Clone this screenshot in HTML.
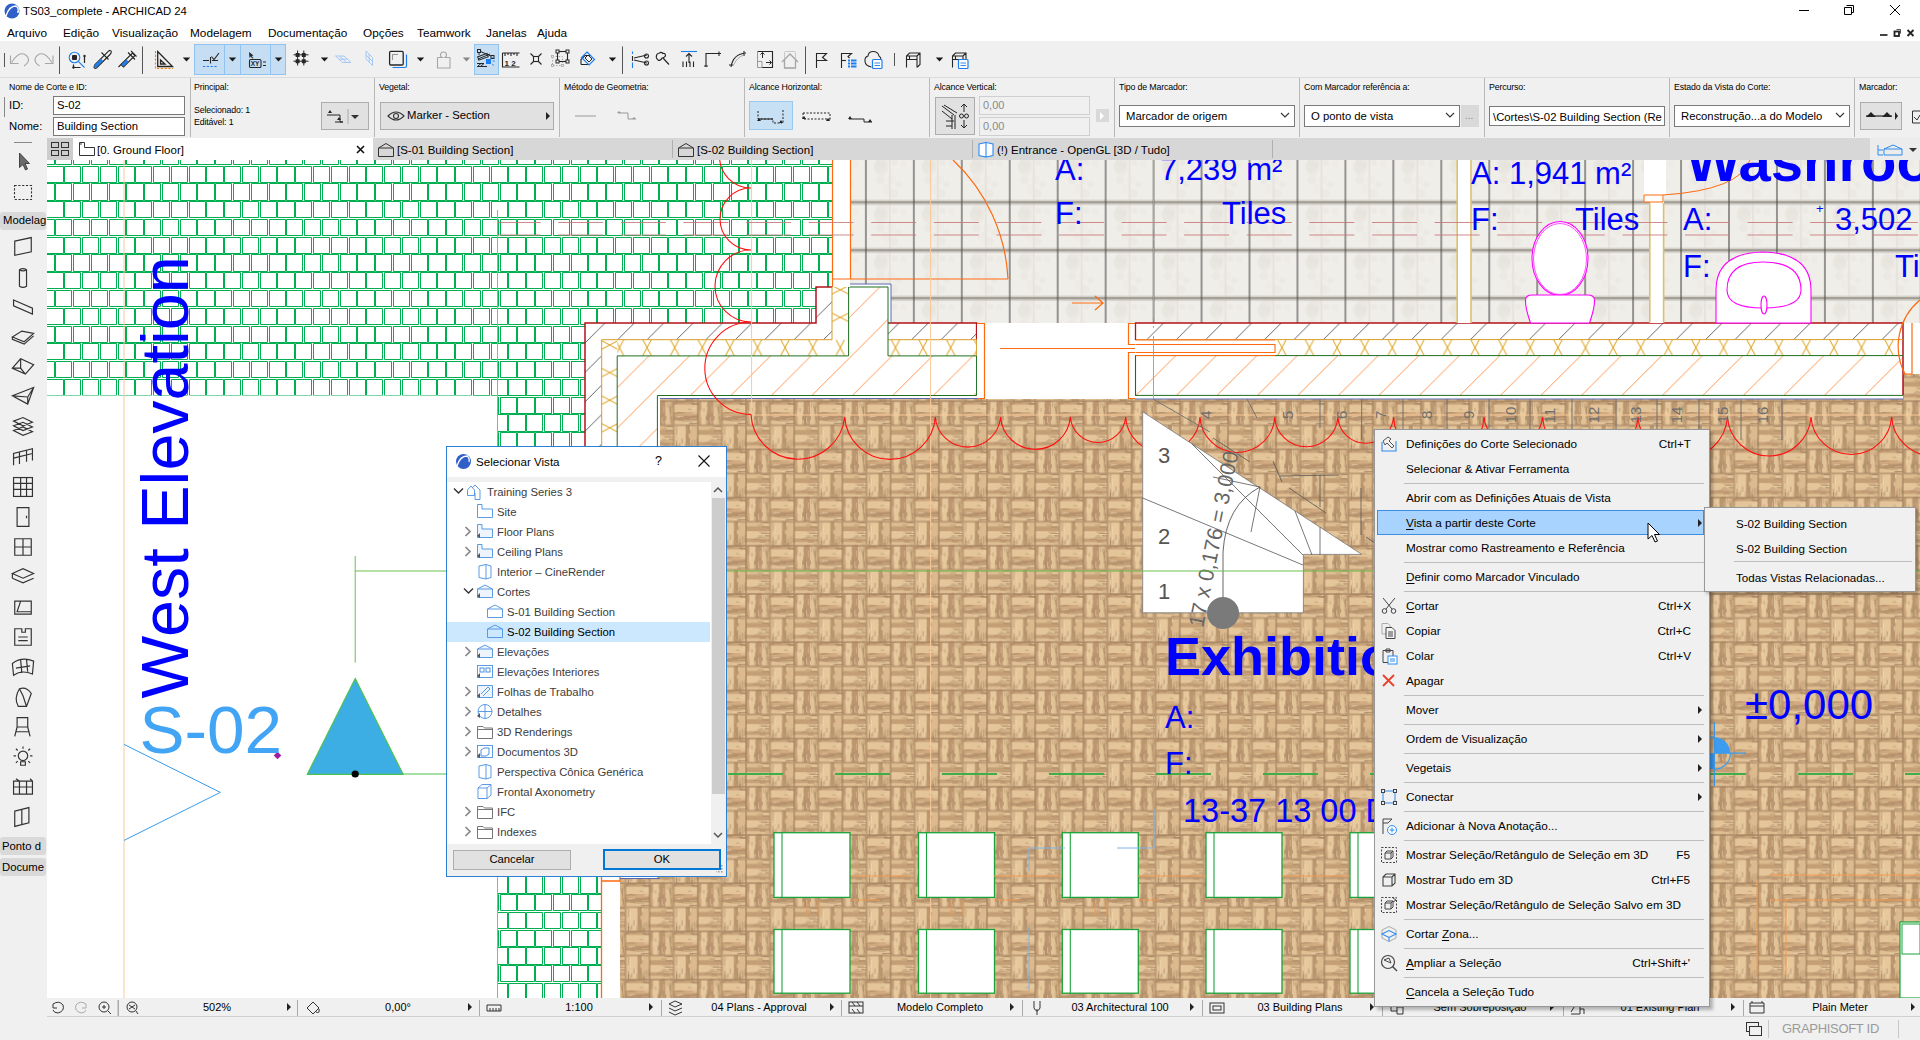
<!DOCTYPE html><html><head><meta charset="utf-8"><style>
*{margin:0;padding:0;box-sizing:border-box}
html,body{width:1920px;height:1040px;overflow:hidden;background:#fff;font-family:"Liberation Sans", sans-serif;color:#000}
.abs{position:absolute}
.t{position:absolute;white-space:nowrap;line-height:1}
</style></head><body>
<svg class="abs" style="left:0;top:0" width="1920" height="1040" viewBox="0 0 1920 1040" font-family="Liberation Sans, sans-serif"><defs><pattern id="brick" patternUnits="userSpaceOnUse" width="17.770" height="35.540" x="62.7" y="165.3"><rect width="17.77" height="35.54" fill="#fff"/><rect x="1.00" y="1.00" width="15.77" height="15.77" fill="none" stroke="#00b050" stroke-width="1.0" shape-rendering="crispEdges"/><rect x="-7.88" y="18.77" width="15.77" height="15.77" fill="none" stroke="#00b050" stroke-width="1.0" shape-rendering="crispEdges"/><rect x="9.88" y="18.77" width="15.77" height="15.77" fill="none" stroke="#00b050" stroke-width="1.0" shape-rendering="crispEdges"/></pattern><pattern id="parq" patternUnits="userSpaceOnUse" width="48.20" height="48.20" x="746" y="594"><rect width="48.2" height="48.2" fill="#d8b487"/><rect x="0.00" y="0" width="3.67" height="24.1" fill="#cca67b"/><rect x="3.62" y="0" width="6.08" height="24.1" fill="#e6c89c"/><rect x="9.64" y="0" width="6.08" height="24.1" fill="#bb9670"/><rect x="15.67" y="0" width="4.87" height="24.1" fill="#e2c397"/><rect x="20.48" y="0" width="3.67" height="24.1" fill="#d3ae82"/><rect x="10.9" y="13.5" width="0.9" height="8.5" fill="#a68462" opacity="0.58"/><rect x="20.6" y="4.6" width="0.9" height="7.8" fill="#a68462" opacity="0.65"/><rect x="19.1" y="2.3" width="0.9" height="4.8" fill="#a08060" opacity="0.62"/><rect x="21.5" y="15.3" width="0.9" height="6.6" fill="#a68462" opacity="0.79"/><rect x="15.8" y="14.8" width="0.9" height="3.9" fill="#a08060" opacity="0.73"/><rect x="1.5" y="0.9" width="0.9" height="8.3" fill="#a08060" opacity="0.71"/><rect x="7.9" y="14.2" width="0.9" height="4.2" fill="#aa8a66" opacity="0.66"/><rect x="12.0" y="16.0" width="0.9" height="5.7" fill="#eed6ae" opacity="0.56"/><rect x="13.3" y="20.6" width="0.9" height="3.5" fill="#eed6ae" opacity="0.53"/><rect x="5.5" y="7.0" width="0.9" height="3.4" fill="#a08060" opacity="0.56"/><rect x="20.4" y="9.3" width="0.9" height="8.7" fill="#a08060" opacity="0.49"/><rect x="22.3" y="1.3" width="0.9" height="5.3" fill="#a68462" opacity="0.57"/><rect x="13.6" y="4.8" width="0.9" height="7.0" fill="#eed6ae" opacity="0.43"/><rect x="8.0" y="16.6" width="0.9" height="7.5" fill="#a08060" opacity="0.45"/><rect x="17.0" y="0.3" width="0.9" height="5.8" fill="#a68462" opacity="0.47"/><rect x="13.5" y="10.8" width="0.9" height="4.1" fill="#aa8a66" opacity="0.57"/><rect x="9.2" y="9.5" width="0.9" height="8.9" fill="#a08060" opacity="0.51"/><rect x="23.4" y="19.3" width="0.9" height="4.8" fill="#a08060" opacity="0.48"/><rect x="9.5" y="17.2" width="0.9" height="6.9" fill="#a08060" opacity="0.42"/><rect x="3.5" y="10.6" width="0.9" height="3.1" fill="#eed6ae" opacity="0.73"/><rect x="9.3" y="1.8" width="0.9" height="4.3" fill="#aa8a66" opacity="0.41"/><rect x="8.9" y="15.0" width="0.9" height="3.8" fill="#a68462" opacity="0.73"/><rect x="3.3" y="9.3" width="0.9" height="6.8" fill="#eed6ae" opacity="0.76"/><rect x="19.7" y="6.0" width="0.9" height="4.1" fill="#aa8a66" opacity="0.67"/><rect x="9.4" y="11.6" width="0.9" height="3.5" fill="#a08060" opacity="0.44"/><rect x="0.9" y="19.7" width="0.9" height="4.4" fill="#a68462" opacity="0.50"/><rect x="0.4" y="0.4" width="23.3" height="23.3" fill="none" stroke="#9e7c5c" stroke-width="0.9" opacity="0.7"/><rect x="24.1" y="0.00" width="24.1" height="3.67" fill="#c9a379"/><rect x="24.1" y="3.62" width="24.1" height="7.28" fill="#e4c599"/><rect x="24.1" y="10.85" width="24.1" height="3.67" fill="#d2ac80"/><rect x="24.1" y="14.46" width="24.1" height="4.87" fill="#b9946e"/><rect x="24.1" y="19.28" width="24.1" height="4.87" fill="#e0c094"/><rect x="43.4" y="14.4" width="4.8" height="0.9" fill="#aa8a66" opacity="0.77"/><rect x="42.3" y="3.0" width="5.9" height="0.9" fill="#a08060" opacity="0.51"/><rect x="45.1" y="4.9" width="3.1" height="0.9" fill="#eed6ae" opacity="0.56"/><rect x="30.1" y="1.1" width="4.7" height="0.9" fill="#aa8a66" opacity="0.44"/><rect x="27.4" y="10.9" width="5.0" height="0.9" fill="#aa8a66" opacity="0.64"/><rect x="43.1" y="11.4" width="5.1" height="0.9" fill="#eed6ae" opacity="0.79"/><rect x="24.6" y="15.3" width="5.9" height="0.9" fill="#eed6ae" opacity="0.53"/><rect x="41.9" y="1.8" width="6.3" height="0.9" fill="#a08060" opacity="0.76"/><rect x="40.4" y="17.0" width="7.8" height="0.9" fill="#eed6ae" opacity="0.54"/><rect x="40.0" y="21.7" width="8.2" height="0.9" fill="#a68462" opacity="0.78"/><rect x="24.8" y="12.0" width="3.1" height="0.9" fill="#a68462" opacity="0.55"/><rect x="24.4" y="1.7" width="3.5" height="0.9" fill="#a08060" opacity="0.80"/><rect x="42.9" y="17.5" width="5.3" height="0.9" fill="#a68462" opacity="0.58"/><rect x="40.7" y="2.0" width="7.5" height="0.9" fill="#a08060" opacity="0.52"/><rect x="26.2" y="0.5" width="8.7" height="0.9" fill="#a08060" opacity="0.60"/><rect x="38.9" y="22.2" width="4.5" height="0.9" fill="#a08060" opacity="0.55"/><rect x="27.6" y="14.7" width="6.1" height="0.9" fill="#eed6ae" opacity="0.66"/><rect x="34.8" y="21.5" width="5.0" height="0.9" fill="#eed6ae" opacity="0.48"/><rect x="34.5" y="19.4" width="8.5" height="0.9" fill="#aa8a66" opacity="0.55"/><rect x="38.2" y="7.6" width="3.8" height="0.9" fill="#a68462" opacity="0.54"/><rect x="44.8" y="1.0" width="3.4" height="0.9" fill="#eed6ae" opacity="0.73"/><rect x="26.8" y="11.4" width="8.6" height="0.9" fill="#a68462" opacity="0.55"/><rect x="36.6" y="16.2" width="7.3" height="0.9" fill="#a68462" opacity="0.53"/><rect x="41.6" y="6.7" width="6.6" height="0.9" fill="#eed6ae" opacity="0.63"/><rect x="31.5" y="19.1" width="3.1" height="0.9" fill="#aa8a66" opacity="0.56"/><rect x="28.7" y="18.5" width="4.6" height="0.9" fill="#aa8a66" opacity="0.72"/><rect x="24.5" y="0.4" width="23.3" height="23.3" fill="none" stroke="#9e7c5c" stroke-width="0.9" opacity="0.7"/><rect x="0" y="24.10" width="24.1" height="4.87" fill="#ddbc90"/><rect x="0" y="28.92" width="24.1" height="4.87" fill="#c49f76"/><rect x="0" y="33.74" width="24.1" height="7.28" fill="#e5c69a"/><rect x="0" y="40.97" width="24.1" height="3.67" fill="#c5a078"/><rect x="0" y="44.59" width="24.1" height="3.67" fill="#dfbe92"/><rect x="20.4" y="26.9" width="3.7" height="0.9" fill="#eed6ae" opacity="0.78"/><rect x="16.5" y="28.9" width="5.9" height="0.9" fill="#aa8a66" opacity="0.69"/><rect x="18.2" y="37.0" width="3.2" height="0.9" fill="#aa8a66" opacity="0.51"/><rect x="8.3" y="40.9" width="6.1" height="0.9" fill="#aa8a66" opacity="0.56"/><rect x="19.1" y="45.9" width="3.5" height="0.9" fill="#a68462" opacity="0.45"/><rect x="10.9" y="39.2" width="8.5" height="0.9" fill="#a68462" opacity="0.62"/><rect x="15.7" y="36.2" width="7.9" height="0.9" fill="#eed6ae" opacity="0.59"/><rect x="15.7" y="29.0" width="7.3" height="0.9" fill="#a08060" opacity="0.49"/><rect x="15.2" y="47.7" width="8.9" height="0.9" fill="#eed6ae" opacity="0.50"/><rect x="17.3" y="24.5" width="6.0" height="0.9" fill="#a08060" opacity="0.58"/><rect x="13.3" y="42.6" width="5.9" height="0.9" fill="#a08060" opacity="0.49"/><rect x="20.9" y="34.4" width="3.2" height="0.9" fill="#eed6ae" opacity="0.67"/><rect x="15.1" y="35.4" width="9.0" height="0.9" fill="#a68462" opacity="0.78"/><rect x="11.9" y="47.0" width="3.5" height="0.9" fill="#aa8a66" opacity="0.58"/><rect x="13.5" y="44.1" width="6.4" height="0.9" fill="#aa8a66" opacity="0.61"/><rect x="19.2" y="37.6" width="4.9" height="0.9" fill="#a68462" opacity="0.78"/><rect x="19.3" y="38.8" width="4.8" height="0.9" fill="#aa8a66" opacity="0.79"/><rect x="12.6" y="37.9" width="4.2" height="0.9" fill="#a08060" opacity="0.60"/><rect x="14.6" y="24.8" width="8.8" height="0.9" fill="#a68462" opacity="0.62"/><rect x="20.5" y="27.0" width="3.6" height="0.9" fill="#aa8a66" opacity="0.43"/><rect x="13.0" y="34.1" width="8.7" height="0.9" fill="#a68462" opacity="0.51"/><rect x="11.4" y="27.2" width="5.6" height="0.9" fill="#a68462" opacity="0.61"/><rect x="2.6" y="34.2" width="3.2" height="0.9" fill="#eed6ae" opacity="0.45"/><rect x="18.8" y="24.6" width="4.2" height="0.9" fill="#aa8a66" opacity="0.40"/><rect x="6.8" y="41.5" width="4.5" height="0.9" fill="#a68462" opacity="0.44"/><rect x="17.6" y="27.1" width="6.1" height="0.9" fill="#eed6ae" opacity="0.69"/><rect x="0.4" y="24.5" width="23.3" height="23.3" fill="none" stroke="#9e7c5c" stroke-width="0.9" opacity="0.7"/><rect x="24.10" y="24.1" width="4.39" height="24.1" fill="#e0c094"/><rect x="28.44" y="24.1" width="7.76" height="24.1" fill="#e7c89c"/><rect x="36.15" y="24.1" width="4.39" height="24.1" fill="#bd9871"/><rect x="40.49" y="24.1" width="7.76" height="24.1" fill="#dcba8e"/><rect x="41.0" y="45.1" width="0.9" height="3.1" fill="#a68462" opacity="0.73"/><rect x="38.9" y="37.1" width="0.9" height="8.2" fill="#aa8a66" opacity="0.61"/><rect x="44.6" y="38.8" width="0.9" height="8.1" fill="#aa8a66" opacity="0.77"/><rect x="39.2" y="32.5" width="0.9" height="4.1" fill="#eed6ae" opacity="0.76"/><rect x="28.8" y="42.9" width="0.9" height="4.2" fill="#a08060" opacity="0.45"/><rect x="29.9" y="41.6" width="0.9" height="4.6" fill="#a08060" opacity="0.57"/><rect x="46.8" y="37.2" width="0.9" height="7.2" fill="#aa8a66" opacity="0.56"/><rect x="40.6" y="24.5" width="0.9" height="4.2" fill="#eed6ae" opacity="0.76"/><rect x="47.4" y="26.9" width="0.9" height="6.0" fill="#eed6ae" opacity="0.60"/><rect x="40.6" y="28.7" width="0.9" height="3.4" fill="#a08060" opacity="0.41"/><rect x="42.5" y="38.9" width="0.9" height="8.4" fill="#a68462" opacity="0.46"/><rect x="28.5" y="29.0" width="0.9" height="8.0" fill="#eed6ae" opacity="0.77"/><rect x="26.4" y="25.6" width="0.9" height="8.7" fill="#a68462" opacity="0.43"/><rect x="26.4" y="33.5" width="0.9" height="5.6" fill="#eed6ae" opacity="0.57"/><rect x="38.6" y="24.4" width="0.9" height="7.2" fill="#aa8a66" opacity="0.47"/><rect x="35.0" y="41.9" width="0.9" height="5.4" fill="#aa8a66" opacity="0.64"/><rect x="26.4" y="43.2" width="0.9" height="4.9" fill="#a08060" opacity="0.72"/><rect x="41.1" y="41.4" width="0.9" height="6.8" fill="#a68462" opacity="0.63"/><rect x="28.7" y="38.2" width="0.9" height="5.0" fill="#eed6ae" opacity="0.51"/><rect x="26.9" y="42.0" width="0.9" height="4.0" fill="#a68462" opacity="0.45"/><rect x="32.1" y="37.1" width="0.9" height="5.2" fill="#a68462" opacity="0.71"/><rect x="33.9" y="41.5" width="0.9" height="3.4" fill="#eed6ae" opacity="0.52"/><rect x="26.5" y="39.3" width="0.9" height="8.9" fill="#a08060" opacity="0.49"/><rect x="46.9" y="40.2" width="0.9" height="5.0" fill="#a68462" opacity="0.63"/><rect x="36.9" y="33.5" width="0.9" height="9.0" fill="#aa8a66" opacity="0.68"/><rect x="42.5" y="45.1" width="0.9" height="3.1" fill="#a08060" opacity="0.70"/><rect x="24.5" y="24.5" width="23.3" height="23.3" fill="none" stroke="#9e7c5c" stroke-width="0.9" opacity="0.7"/></pattern><pattern id="tile" patternUnits="userSpaceOnUse" width="47.95" height="47.95" x="2.8" y="10.4"><rect width="47.95" height="47.95" fill="#f0eee9"/><circle cx="14.6" cy="25.6" r="4.5" fill="#e4ded7" opacity="0.3"/><circle cx="28.5" cy="8.4" r="3.1" fill="#e4ded7" opacity="0.3"/><circle cx="15.3" cy="14.4" r="7.0" fill="#e4ded7" opacity="0.3"/><circle cx="25.5" cy="25.8" r="4.6" fill="#e9e5df" opacity="0.3"/><circle cx="14.3" cy="11.5" r="6.7" fill="#e4ded7" opacity="0.3"/><circle cx="32.7" cy="30.2" r="3.3" fill="#e6e1da" opacity="0.3"/><circle cx="16.8" cy="7.1" r="6.5" fill="#e4ded7" opacity="0.3"/><circle cx="27.4" cy="39.1" r="4.6" fill="#e4ded7" opacity="0.3"/><circle cx="20.2" cy="34.8" r="4.8" fill="#e9e5df" opacity="0.3"/><circle cx="37.6" cy="9.5" r="3.5" fill="#e9e5df" opacity="0.3"/><rect x="23.0" y="0" width="2" height="47.95" fill="#e3dfd8" opacity="0.7"/><rect x="0" y="0" width="47.95" height="1.3" fill="#a29e96"/><rect x="0" y="46.75" width="47.95" height="1.2" fill="#a29e96"/><rect x="0" y="1.3" width="47.95" height="1.2" fill="#c4c0b9"/><rect x="0" y="45.55" width="47.95" height="1.2" fill="#d0ccc5"/><rect x="0" y="0" width="0.55" height="47.95" fill="#4a4946"/><rect x="47.40" y="0" width="0.55" height="47.95" fill="#4a4946"/></pattern><pattern id="hb" patternUnits="userSpaceOnUse" width="29.4" height="29.4" x="16.60" y="0"><path d="M-2 31.4 L31.4 -2 M-31.4 31.4 L2 -2 M27.4 31.4 L60.8 -2" stroke="#555" stroke-width="0.9"/></pattern><pattern id="ho" patternUnits="userSpaceOnUse" width="40.5" height="40.5" x="32.90" y="0"><path d="M-2 42.5 L42.5 -2 M-42.5 42.5 L2 -2 M38.5 42.5 L83.0 -2" stroke="#ff8a3d" stroke-width="0.9"/></pattern><pattern id="hx" patternUnits="userSpaceOnUse" width="27.6" height="16" x="26.10" y="339.6"><path d="M9.50 0 L18.10 16 M18.10 0 L9.50 16" stroke="#e0a21e" stroke-width="1"/></pattern><pattern id="hxv" patternUnits="userSpaceOnUse" width="16" height="27.6" x="601.7" y="0"><path d="M0 9.50 L16 18.10 M0 18.10 L16 9.50" stroke="#e0a21e" stroke-width="1"/></pattern><pattern id="hxv2" patternUnits="userSpaceOnUse" width="16.6" height="27.6" x="832" y="0"><path d="M0 9.50 L16.6 18.10 M0 18.10 L16.6 9.50" stroke="#e0a21e" stroke-width="1"/></pattern><clipPath id="dclip"><rect x="47" y="160" width="1873" height="838"/></clipPath></defs><g clip-path="url(#dclip)"><rect x="47" y="160" width="1873" height="838" fill="#fff"/><clipPath id="bclip"><path d="M47 160 H832 V287 H816 V323 H585 V877 H601 V998 H497 V395.4 H47 Z"/></clipPath><g clip-path="url(#bclip)"><path d="M29.5 130.5H45.5V146.5H29.5ZM46.5 130.5H63.5V146.5H46.5ZM64.5 130.5H80.5V146.5H64.5ZM82.5 130.5H98.5V146.5H82.5ZM100.5 130.5H116.5V146.5H100.5ZM118.5 130.5H134.5V146.5H118.5ZM135.5 130.5H151.5V146.5H135.5ZM153.5 130.5H169.5V146.5H153.5ZM171.5 130.5H187.5V146.5H171.5ZM189.5 130.5H205.5V146.5H189.5ZM206.5 130.5H223.5V146.5H206.5ZM224.5 130.5H240.5V146.5H224.5ZM242.5 130.5H258.5V146.5H242.5ZM260.5 130.5H276.5V146.5H260.5ZM277.5 130.5H294.5V146.5H277.5ZM295.5 130.5H311.5V146.5H295.5ZM313.5 130.5H329.5V146.5H313.5ZM331.5 130.5H347.5V146.5H331.5ZM349.5 130.5H365.5V146.5H349.5ZM366.5 130.5H382.5V146.5H366.5ZM384.5 130.5H400.5V146.5H384.5ZM402.5 130.5H418.5V146.5H402.5ZM420.5 130.5H436.5V146.5H420.5ZM437.5 130.5H454.5V146.5H437.5ZM455.5 130.5H471.5V146.5H455.5ZM473.5 130.5H489.5V146.5H473.5ZM491.5 130.5H507.5V146.5H491.5ZM508.5 130.5H525.5V146.5H508.5ZM526.5 130.5H542.5V146.5H526.5ZM544.5 130.5H560.5V146.5H544.5ZM562.5 130.5H578.5V146.5H562.5ZM580.5 130.5H596.5V146.5H580.5ZM597.5 130.5H613.5V146.5H597.5ZM615.5 130.5H631.5V146.5H615.5ZM633.5 130.5H649.5V146.5H633.5ZM651.5 130.5H667.5V146.5H651.5ZM668.5 130.5H685.5V146.5H668.5ZM686.5 130.5H702.5V146.5H686.5ZM704.5 130.5H720.5V146.5H704.5ZM722.5 130.5H738.5V146.5H722.5ZM739.5 130.5H756.5V146.5H739.5ZM757.5 130.5H773.5V146.5H757.5ZM775.5 130.5H791.5V146.5H775.5ZM793.5 130.5H809.5V146.5H793.5ZM811.5 130.5H827.5V146.5H811.5ZM828.5 130.5H844.5V146.5H828.5ZM846.5 130.5H862.5V146.5H846.5ZM20.5 148.5H36.5V164.5H20.5ZM38.5 148.5H54.5V164.5H38.5ZM55.5 148.5H71.5V164.5H55.5ZM73.5 148.5H89.5V164.5H73.5ZM91.5 148.5H107.5V164.5H91.5ZM109.5 148.5H125.5V164.5H109.5ZM126.5 148.5H143.5V164.5H126.5ZM144.5 148.5H160.5V164.5H144.5ZM162.5 148.5H178.5V164.5H162.5ZM180.5 148.5H196.5V164.5H180.5ZM197.5 148.5H214.5V164.5H197.5ZM215.5 148.5H231.5V164.5H215.5ZM233.5 148.5H249.5V164.5H233.5ZM251.5 148.5H267.5V164.5H251.5ZM269.5 148.5H285.5V164.5H269.5ZM286.5 148.5H302.5V164.5H286.5ZM304.5 148.5H320.5V164.5H304.5ZM322.5 148.5H338.5V164.5H322.5ZM340.5 148.5H356.5V164.5H340.5ZM357.5 148.5H374.5V164.5H357.5ZM375.5 148.5H391.5V164.5H375.5ZM393.5 148.5H409.5V164.5H393.5ZM411.5 148.5H427.5V164.5H411.5ZM428.5 148.5H445.5V164.5H428.5ZM446.5 148.5H462.5V164.5H446.5ZM464.5 148.5H480.5V164.5H464.5ZM482.5 148.5H498.5V164.5H482.5ZM500.5 148.5H516.5V164.5H500.5ZM517.5 148.5H534.5V164.5H517.5ZM535.5 148.5H551.5V164.5H535.5ZM553.5 148.5H569.5V164.5H553.5ZM571.5 148.5H587.5V164.5H571.5ZM588.5 148.5H605.5V164.5H588.5ZM606.5 148.5H622.5V164.5H606.5ZM624.5 148.5H640.5V164.5H624.5ZM642.5 148.5H658.5V164.5H642.5ZM659.5 148.5H676.5V164.5H659.5ZM677.5 148.5H693.5V164.5H677.5ZM695.5 148.5H711.5V164.5H695.5ZM713.5 148.5H729.5V164.5H713.5ZM731.5 148.5H747.5V164.5H731.5ZM748.5 148.5H765.5V164.5H748.5ZM766.5 148.5H782.5V164.5H766.5ZM784.5 148.5H800.5V164.5H784.5ZM802.5 148.5H818.5V164.5H802.5ZM819.5 148.5H836.5V164.5H819.5ZM837.5 148.5H853.5V164.5H837.5ZM29.5 166.5H45.5V182.5H29.5ZM46.5 166.5H63.5V182.5H46.5ZM64.5 166.5H80.5V182.5H64.5ZM82.5 166.5H98.5V182.5H82.5ZM100.5 166.5H116.5V182.5H100.5ZM118.5 166.5H134.5V182.5H118.5ZM135.5 166.5H151.5V182.5H135.5ZM153.5 166.5H169.5V182.5H153.5ZM171.5 166.5H187.5V182.5H171.5ZM189.5 166.5H205.5V182.5H189.5ZM206.5 166.5H223.5V182.5H206.5ZM224.5 166.5H240.5V182.5H224.5ZM242.5 166.5H258.5V182.5H242.5ZM260.5 166.5H276.5V182.5H260.5ZM277.5 166.5H294.5V182.5H277.5ZM295.5 166.5H311.5V182.5H295.5ZM313.5 166.5H329.5V182.5H313.5ZM331.5 166.5H347.5V182.5H331.5ZM349.5 166.5H365.5V182.5H349.5ZM366.5 166.5H382.5V182.5H366.5ZM384.5 166.5H400.5V182.5H384.5ZM402.5 166.5H418.5V182.5H402.5ZM420.5 166.5H436.5V182.5H420.5ZM437.5 166.5H454.5V182.5H437.5ZM455.5 166.5H471.5V182.5H455.5ZM473.5 166.5H489.5V182.5H473.5ZM491.5 166.5H507.5V182.5H491.5ZM508.5 166.5H525.5V182.5H508.5ZM526.5 166.5H542.5V182.5H526.5ZM544.5 166.5H560.5V182.5H544.5ZM562.5 166.5H578.5V182.5H562.5ZM580.5 166.5H596.5V182.5H580.5ZM597.5 166.5H613.5V182.5H597.5ZM615.5 166.5H631.5V182.5H615.5ZM633.5 166.5H649.5V182.5H633.5ZM651.5 166.5H667.5V182.5H651.5ZM668.5 166.5H685.5V182.5H668.5ZM686.5 166.5H702.5V182.5H686.5ZM704.5 166.5H720.5V182.5H704.5ZM722.5 166.5H738.5V182.5H722.5ZM739.5 166.5H756.5V182.5H739.5ZM757.5 166.5H773.5V182.5H757.5ZM775.5 166.5H791.5V182.5H775.5ZM793.5 166.5H809.5V182.5H793.5ZM811.5 166.5H827.5V182.5H811.5ZM828.5 166.5H844.5V182.5H828.5ZM846.5 166.5H862.5V182.5H846.5ZM20.5 183.5H36.5V200.5H20.5ZM38.5 183.5H54.5V200.5H38.5ZM55.5 183.5H71.5V200.5H55.5ZM73.5 183.5H89.5V200.5H73.5ZM91.5 183.5H107.5V200.5H91.5ZM109.5 183.5H125.5V200.5H109.5ZM126.5 183.5H143.5V200.5H126.5ZM144.5 183.5H160.5V200.5H144.5ZM162.5 183.5H178.5V200.5H162.5ZM180.5 183.5H196.5V200.5H180.5ZM197.5 183.5H214.5V200.5H197.5ZM215.5 183.5H231.5V200.5H215.5ZM233.5 183.5H249.5V200.5H233.5ZM251.5 183.5H267.5V200.5H251.5ZM269.5 183.5H285.5V200.5H269.5ZM286.5 183.5H302.5V200.5H286.5ZM304.5 183.5H320.5V200.5H304.5ZM322.5 183.5H338.5V200.5H322.5ZM340.5 183.5H356.5V200.5H340.5ZM357.5 183.5H374.5V200.5H357.5ZM375.5 183.5H391.5V200.5H375.5ZM393.5 183.5H409.5V200.5H393.5ZM411.5 183.5H427.5V200.5H411.5ZM428.5 183.5H445.5V200.5H428.5ZM446.5 183.5H462.5V200.5H446.5ZM464.5 183.5H480.5V200.5H464.5ZM482.5 183.5H498.5V200.5H482.5ZM500.5 183.5H516.5V200.5H500.5ZM517.5 183.5H534.5V200.5H517.5ZM535.5 183.5H551.5V200.5H535.5ZM553.5 183.5H569.5V200.5H553.5ZM571.5 183.5H587.5V200.5H571.5ZM588.5 183.5H605.5V200.5H588.5ZM606.5 183.5H622.5V200.5H606.5ZM624.5 183.5H640.5V200.5H624.5ZM642.5 183.5H658.5V200.5H642.5ZM659.5 183.5H676.5V200.5H659.5ZM677.5 183.5H693.5V200.5H677.5ZM695.5 183.5H711.5V200.5H695.5ZM713.5 183.5H729.5V200.5H713.5ZM731.5 183.5H747.5V200.5H731.5ZM748.5 183.5H765.5V200.5H748.5ZM766.5 183.5H782.5V200.5H766.5ZM784.5 183.5H800.5V200.5H784.5ZM802.5 183.5H818.5V200.5H802.5ZM819.5 183.5H836.5V200.5H819.5ZM837.5 183.5H853.5V200.5H837.5ZM29.5 201.5H45.5V217.5H29.5ZM46.5 201.5H63.5V217.5H46.5ZM64.5 201.5H80.5V217.5H64.5ZM82.5 201.5H98.5V217.5H82.5ZM100.5 201.5H116.5V217.5H100.5ZM118.5 201.5H134.5V217.5H118.5ZM135.5 201.5H151.5V217.5H135.5ZM153.5 201.5H169.5V217.5H153.5ZM171.5 201.5H187.5V217.5H171.5ZM189.5 201.5H205.5V217.5H189.5ZM206.5 201.5H223.5V217.5H206.5ZM224.5 201.5H240.5V217.5H224.5ZM242.5 201.5H258.5V217.5H242.5ZM260.5 201.5H276.5V217.5H260.5ZM277.5 201.5H294.5V217.5H277.5ZM295.5 201.5H311.5V217.5H295.5ZM313.5 201.5H329.5V217.5H313.5ZM331.5 201.5H347.5V217.5H331.5ZM349.5 201.5H365.5V217.5H349.5ZM366.5 201.5H382.5V217.5H366.5ZM384.5 201.5H400.5V217.5H384.5ZM402.5 201.5H418.5V217.5H402.5ZM420.5 201.5H436.5V217.5H420.5ZM437.5 201.5H454.5V217.5H437.5ZM455.5 201.5H471.5V217.5H455.5ZM473.5 201.5H489.5V217.5H473.5ZM491.5 201.5H507.5V217.5H491.5ZM508.5 201.5H525.5V217.5H508.5ZM526.5 201.5H542.5V217.5H526.5ZM544.5 201.5H560.5V217.5H544.5ZM562.5 201.5H578.5V217.5H562.5ZM580.5 201.5H596.5V217.5H580.5ZM597.5 201.5H613.5V217.5H597.5ZM615.5 201.5H631.5V217.5H615.5ZM633.5 201.5H649.5V217.5H633.5ZM651.5 201.5H667.5V217.5H651.5ZM668.5 201.5H685.5V217.5H668.5ZM686.5 201.5H702.5V217.5H686.5ZM704.5 201.5H720.5V217.5H704.5ZM722.5 201.5H738.5V217.5H722.5ZM739.5 201.5H756.5V217.5H739.5ZM757.5 201.5H773.5V217.5H757.5ZM775.5 201.5H791.5V217.5H775.5ZM793.5 201.5H809.5V217.5H793.5ZM811.5 201.5H827.5V217.5H811.5ZM828.5 201.5H844.5V217.5H828.5ZM846.5 201.5H862.5V217.5H846.5ZM20.5 219.5H36.5V235.5H20.5ZM38.5 219.5H54.5V235.5H38.5ZM55.5 219.5H71.5V235.5H55.5ZM73.5 219.5H89.5V235.5H73.5ZM91.5 219.5H107.5V235.5H91.5ZM109.5 219.5H125.5V235.5H109.5ZM126.5 219.5H143.5V235.5H126.5ZM144.5 219.5H160.5V235.5H144.5ZM162.5 219.5H178.5V235.5H162.5ZM180.5 219.5H196.5V235.5H180.5ZM197.5 219.5H214.5V235.5H197.5ZM215.5 219.5H231.5V235.5H215.5ZM233.5 219.5H249.5V235.5H233.5ZM251.5 219.5H267.5V235.5H251.5ZM269.5 219.5H285.5V235.5H269.5ZM286.5 219.5H302.5V235.5H286.5ZM304.5 219.5H320.5V235.5H304.5ZM322.5 219.5H338.5V235.5H322.5ZM340.5 219.5H356.5V235.5H340.5ZM357.5 219.5H374.5V235.5H357.5ZM375.5 219.5H391.5V235.5H375.5ZM393.5 219.5H409.5V235.5H393.5ZM411.5 219.5H427.5V235.5H411.5ZM428.5 219.5H445.5V235.5H428.5ZM446.5 219.5H462.5V235.5H446.5ZM464.5 219.5H480.5V235.5H464.5ZM482.5 219.5H498.5V235.5H482.5ZM500.5 219.5H516.5V235.5H500.5ZM517.5 219.5H534.5V235.5H517.5ZM535.5 219.5H551.5V235.5H535.5ZM553.5 219.5H569.5V235.5H553.5ZM571.5 219.5H587.5V235.5H571.5ZM588.5 219.5H605.5V235.5H588.5ZM606.5 219.5H622.5V235.5H606.5ZM624.5 219.5H640.5V235.5H624.5ZM642.5 219.5H658.5V235.5H642.5ZM659.5 219.5H676.5V235.5H659.5ZM677.5 219.5H693.5V235.5H677.5ZM695.5 219.5H711.5V235.5H695.5ZM713.5 219.5H729.5V235.5H713.5ZM731.5 219.5H747.5V235.5H731.5ZM748.5 219.5H765.5V235.5H748.5ZM766.5 219.5H782.5V235.5H766.5ZM784.5 219.5H800.5V235.5H784.5ZM802.5 219.5H818.5V235.5H802.5ZM819.5 219.5H836.5V235.5H819.5ZM837.5 219.5H853.5V235.5H837.5ZM29.5 237.5H45.5V253.5H29.5ZM46.5 237.5H63.5V253.5H46.5ZM64.5 237.5H80.5V253.5H64.5ZM82.5 237.5H98.5V253.5H82.5ZM100.5 237.5H116.5V253.5H100.5ZM118.5 237.5H134.5V253.5H118.5ZM135.5 237.5H151.5V253.5H135.5ZM153.5 237.5H169.5V253.5H153.5ZM171.5 237.5H187.5V253.5H171.5ZM189.5 237.5H205.5V253.5H189.5ZM206.5 237.5H223.5V253.5H206.5ZM224.5 237.5H240.5V253.5H224.5ZM242.5 237.5H258.5V253.5H242.5ZM260.5 237.5H276.5V253.5H260.5ZM277.5 237.5H294.5V253.5H277.5ZM295.5 237.5H311.5V253.5H295.5ZM313.5 237.5H329.5V253.5H313.5ZM331.5 237.5H347.5V253.5H331.5ZM349.5 237.5H365.5V253.5H349.5ZM366.5 237.5H382.5V253.5H366.5ZM384.5 237.5H400.5V253.5H384.5ZM402.5 237.5H418.5V253.5H402.5ZM420.5 237.5H436.5V253.5H420.5ZM437.5 237.5H454.5V253.5H437.5ZM455.5 237.5H471.5V253.5H455.5ZM473.5 237.5H489.5V253.5H473.5ZM491.5 237.5H507.5V253.5H491.5ZM508.5 237.5H525.5V253.5H508.5ZM526.5 237.5H542.5V253.5H526.5ZM544.5 237.5H560.5V253.5H544.5ZM562.5 237.5H578.5V253.5H562.5ZM580.5 237.5H596.5V253.5H580.5ZM597.5 237.5H613.5V253.5H597.5ZM615.5 237.5H631.5V253.5H615.5ZM633.5 237.5H649.5V253.5H633.5ZM651.5 237.5H667.5V253.5H651.5ZM668.5 237.5H685.5V253.5H668.5ZM686.5 237.5H702.5V253.5H686.5ZM704.5 237.5H720.5V253.5H704.5ZM722.5 237.5H738.5V253.5H722.5ZM739.5 237.5H756.5V253.5H739.5ZM757.5 237.5H773.5V253.5H757.5ZM775.5 237.5H791.5V253.5H775.5ZM793.5 237.5H809.5V253.5H793.5ZM811.5 237.5H827.5V253.5H811.5ZM828.5 237.5H844.5V253.5H828.5ZM846.5 237.5H862.5V253.5H846.5ZM20.5 254.5H36.5V271.5H20.5ZM38.5 254.5H54.5V271.5H38.5ZM55.5 254.5H71.5V271.5H55.5ZM73.5 254.5H89.5V271.5H73.5ZM91.5 254.5H107.5V271.5H91.5ZM109.5 254.5H125.5V271.5H109.5ZM126.5 254.5H143.5V271.5H126.5ZM144.5 254.5H160.5V271.5H144.5ZM162.5 254.5H178.5V271.5H162.5ZM180.5 254.5H196.5V271.5H180.5ZM197.5 254.5H214.5V271.5H197.5ZM215.5 254.5H231.5V271.5H215.5ZM233.5 254.5H249.5V271.5H233.5ZM251.5 254.5H267.5V271.5H251.5ZM269.5 254.5H285.5V271.5H269.5ZM286.5 254.5H302.5V271.5H286.5ZM304.5 254.5H320.5V271.5H304.5ZM322.5 254.5H338.5V271.5H322.5ZM340.5 254.5H356.5V271.5H340.5ZM357.5 254.5H374.5V271.5H357.5ZM375.5 254.5H391.5V271.5H375.5ZM393.5 254.5H409.5V271.5H393.5ZM411.5 254.5H427.5V271.5H411.5ZM428.5 254.5H445.5V271.5H428.5ZM446.5 254.5H462.5V271.5H446.5ZM464.5 254.5H480.5V271.5H464.5ZM482.5 254.5H498.5V271.5H482.5ZM500.5 254.5H516.5V271.5H500.5ZM517.5 254.5H534.5V271.5H517.5ZM535.5 254.5H551.5V271.5H535.5ZM553.5 254.5H569.5V271.5H553.5ZM571.5 254.5H587.5V271.5H571.5ZM588.5 254.5H605.5V271.5H588.5ZM606.5 254.5H622.5V271.5H606.5ZM624.5 254.5H640.5V271.5H624.5ZM642.5 254.5H658.5V271.5H642.5ZM659.5 254.5H676.5V271.5H659.5ZM677.5 254.5H693.5V271.5H677.5ZM695.5 254.5H711.5V271.5H695.5ZM713.5 254.5H729.5V271.5H713.5ZM731.5 254.5H747.5V271.5H731.5ZM748.5 254.5H765.5V271.5H748.5ZM766.5 254.5H782.5V271.5H766.5ZM784.5 254.5H800.5V271.5H784.5ZM802.5 254.5H818.5V271.5H802.5ZM819.5 254.5H836.5V271.5H819.5ZM837.5 254.5H853.5V271.5H837.5ZM29.5 272.5H45.5V288.5H29.5ZM46.5 272.5H63.5V288.5H46.5ZM64.5 272.5H80.5V288.5H64.5ZM82.5 272.5H98.5V288.5H82.5ZM100.5 272.5H116.5V288.5H100.5ZM118.5 272.5H134.5V288.5H118.5ZM135.5 272.5H151.5V288.5H135.5ZM153.5 272.5H169.5V288.5H153.5ZM171.5 272.5H187.5V288.5H171.5ZM189.5 272.5H205.5V288.5H189.5ZM206.5 272.5H223.5V288.5H206.5ZM224.5 272.5H240.5V288.5H224.5ZM242.5 272.5H258.5V288.5H242.5ZM260.5 272.5H276.5V288.5H260.5ZM277.5 272.5H294.5V288.5H277.5ZM295.5 272.5H311.5V288.5H295.5ZM313.5 272.5H329.5V288.5H313.5ZM331.5 272.5H347.5V288.5H331.5ZM349.5 272.5H365.5V288.5H349.5ZM366.5 272.5H382.5V288.5H366.5ZM384.5 272.5H400.5V288.5H384.5ZM402.5 272.5H418.5V288.5H402.5ZM420.5 272.5H436.5V288.5H420.5ZM437.5 272.5H454.5V288.5H437.5ZM455.5 272.5H471.5V288.5H455.5ZM473.5 272.5H489.5V288.5H473.5ZM491.5 272.5H507.5V288.5H491.5ZM508.5 272.5H525.5V288.5H508.5ZM526.5 272.5H542.5V288.5H526.5ZM544.5 272.5H560.5V288.5H544.5ZM562.5 272.5H578.5V288.5H562.5ZM580.5 272.5H596.5V288.5H580.5ZM597.5 272.5H613.5V288.5H597.5ZM615.5 272.5H631.5V288.5H615.5ZM633.5 272.5H649.5V288.5H633.5ZM651.5 272.5H667.5V288.5H651.5ZM668.5 272.5H685.5V288.5H668.5ZM686.5 272.5H702.5V288.5H686.5ZM704.5 272.5H720.5V288.5H704.5ZM722.5 272.5H738.5V288.5H722.5ZM739.5 272.5H756.5V288.5H739.5ZM757.5 272.5H773.5V288.5H757.5ZM775.5 272.5H791.5V288.5H775.5ZM793.5 272.5H809.5V288.5H793.5ZM811.5 272.5H827.5V288.5H811.5ZM828.5 272.5H844.5V288.5H828.5ZM846.5 272.5H862.5V288.5H846.5ZM20.5 290.5H36.5V306.5H20.5ZM38.5 290.5H54.5V306.5H38.5ZM55.5 290.5H71.5V306.5H55.5ZM73.5 290.5H89.5V306.5H73.5ZM91.5 290.5H107.5V306.5H91.5ZM109.5 290.5H125.5V306.5H109.5ZM126.5 290.5H143.5V306.5H126.5ZM144.5 290.5H160.5V306.5H144.5ZM162.5 290.5H178.5V306.5H162.5ZM180.5 290.5H196.5V306.5H180.5ZM197.5 290.5H214.5V306.5H197.5ZM215.5 290.5H231.5V306.5H215.5ZM233.5 290.5H249.5V306.5H233.5ZM251.5 290.5H267.5V306.5H251.5ZM269.5 290.5H285.5V306.5H269.5ZM286.5 290.5H302.5V306.5H286.5ZM304.5 290.5H320.5V306.5H304.5ZM322.5 290.5H338.5V306.5H322.5ZM340.5 290.5H356.5V306.5H340.5ZM357.5 290.5H374.5V306.5H357.5ZM375.5 290.5H391.5V306.5H375.5ZM393.5 290.5H409.5V306.5H393.5ZM411.5 290.5H427.5V306.5H411.5ZM428.5 290.5H445.5V306.5H428.5ZM446.5 290.5H462.5V306.5H446.5ZM464.5 290.5H480.5V306.5H464.5ZM482.5 290.5H498.5V306.5H482.5ZM500.5 290.5H516.5V306.5H500.5ZM517.5 290.5H534.5V306.5H517.5ZM535.5 290.5H551.5V306.5H535.5ZM553.5 290.5H569.5V306.5H553.5ZM571.5 290.5H587.5V306.5H571.5ZM588.5 290.5H605.5V306.5H588.5ZM606.5 290.5H622.5V306.5H606.5ZM624.5 290.5H640.5V306.5H624.5ZM642.5 290.5H658.5V306.5H642.5ZM659.5 290.5H676.5V306.5H659.5ZM677.5 290.5H693.5V306.5H677.5ZM695.5 290.5H711.5V306.5H695.5ZM713.5 290.5H729.5V306.5H713.5ZM731.5 290.5H747.5V306.5H731.5ZM748.5 290.5H765.5V306.5H748.5ZM766.5 290.5H782.5V306.5H766.5ZM784.5 290.5H800.5V306.5H784.5ZM802.5 290.5H818.5V306.5H802.5ZM819.5 290.5H836.5V306.5H819.5ZM837.5 290.5H853.5V306.5H837.5ZM29.5 308.5H45.5V324.5H29.5ZM46.5 308.5H63.5V324.5H46.5ZM64.5 308.5H80.5V324.5H64.5ZM82.5 308.5H98.5V324.5H82.5ZM100.5 308.5H116.5V324.5H100.5ZM118.5 308.5H134.5V324.5H118.5ZM135.5 308.5H151.5V324.5H135.5ZM153.5 308.5H169.5V324.5H153.5ZM171.5 308.5H187.5V324.5H171.5ZM189.5 308.5H205.5V324.5H189.5ZM206.5 308.5H223.5V324.5H206.5ZM224.5 308.5H240.5V324.5H224.5ZM242.5 308.5H258.5V324.5H242.5ZM260.5 308.5H276.5V324.5H260.5ZM277.5 308.5H294.5V324.5H277.5ZM295.5 308.5H311.5V324.5H295.5ZM313.5 308.5H329.5V324.5H313.5ZM331.5 308.5H347.5V324.5H331.5ZM349.5 308.5H365.5V324.5H349.5ZM366.5 308.5H382.5V324.5H366.5ZM384.5 308.5H400.5V324.5H384.5ZM402.5 308.5H418.5V324.5H402.5ZM420.5 308.5H436.5V324.5H420.5ZM437.5 308.5H454.5V324.5H437.5ZM455.5 308.5H471.5V324.5H455.5ZM473.5 308.5H489.5V324.5H473.5ZM491.5 308.5H507.5V324.5H491.5ZM508.5 308.5H525.5V324.5H508.5ZM526.5 308.5H542.5V324.5H526.5ZM544.5 308.5H560.5V324.5H544.5ZM562.5 308.5H578.5V324.5H562.5ZM580.5 308.5H596.5V324.5H580.5ZM597.5 308.5H613.5V324.5H597.5ZM615.5 308.5H631.5V324.5H615.5ZM633.5 308.5H649.5V324.5H633.5ZM651.5 308.5H667.5V324.5H651.5ZM668.5 308.5H685.5V324.5H668.5ZM686.5 308.5H702.5V324.5H686.5ZM704.5 308.5H720.5V324.5H704.5ZM722.5 308.5H738.5V324.5H722.5ZM739.5 308.5H756.5V324.5H739.5ZM757.5 308.5H773.5V324.5H757.5ZM775.5 308.5H791.5V324.5H775.5ZM793.5 308.5H809.5V324.5H793.5ZM811.5 308.5H827.5V324.5H811.5ZM828.5 308.5H844.5V324.5H828.5ZM846.5 308.5H862.5V324.5H846.5ZM20.5 326.5H36.5V342.5H20.5ZM38.5 326.5H54.5V342.5H38.5ZM55.5 326.5H71.5V342.5H55.5ZM73.5 326.5H89.5V342.5H73.5ZM91.5 326.5H107.5V342.5H91.5ZM109.5 326.5H125.5V342.5H109.5ZM126.5 326.5H143.5V342.5H126.5ZM144.5 326.5H160.5V342.5H144.5ZM162.5 326.5H178.5V342.5H162.5ZM180.5 326.5H196.5V342.5H180.5ZM197.5 326.5H214.5V342.5H197.5ZM215.5 326.5H231.5V342.5H215.5ZM233.5 326.5H249.5V342.5H233.5ZM251.5 326.5H267.5V342.5H251.5ZM269.5 326.5H285.5V342.5H269.5ZM286.5 326.5H302.5V342.5H286.5ZM304.5 326.5H320.5V342.5H304.5ZM322.5 326.5H338.5V342.5H322.5ZM340.5 326.5H356.5V342.5H340.5ZM357.5 326.5H374.5V342.5H357.5ZM375.5 326.5H391.5V342.5H375.5ZM393.5 326.5H409.5V342.5H393.5ZM411.5 326.5H427.5V342.5H411.5ZM428.5 326.5H445.5V342.5H428.5ZM446.5 326.5H462.5V342.5H446.5ZM464.5 326.5H480.5V342.5H464.5ZM482.5 326.5H498.5V342.5H482.5ZM500.5 326.5H516.5V342.5H500.5ZM517.5 326.5H534.5V342.5H517.5ZM535.5 326.5H551.5V342.5H535.5ZM553.5 326.5H569.5V342.5H553.5ZM571.5 326.5H587.5V342.5H571.5ZM588.5 326.5H605.5V342.5H588.5ZM606.5 326.5H622.5V342.5H606.5ZM624.5 326.5H640.5V342.5H624.5ZM642.5 326.5H658.5V342.5H642.5ZM659.5 326.5H676.5V342.5H659.5ZM677.5 326.5H693.5V342.5H677.5ZM695.5 326.5H711.5V342.5H695.5ZM713.5 326.5H729.5V342.5H713.5ZM731.5 326.5H747.5V342.5H731.5ZM748.5 326.5H765.5V342.5H748.5ZM766.5 326.5H782.5V342.5H766.5ZM784.5 326.5H800.5V342.5H784.5ZM802.5 326.5H818.5V342.5H802.5ZM819.5 326.5H836.5V342.5H819.5ZM837.5 326.5H853.5V342.5H837.5ZM29.5 343.5H45.5V359.5H29.5ZM46.5 343.5H63.5V359.5H46.5ZM64.5 343.5H80.5V359.5H64.5ZM82.5 343.5H98.5V359.5H82.5ZM100.5 343.5H116.5V359.5H100.5ZM118.5 343.5H134.5V359.5H118.5ZM135.5 343.5H151.5V359.5H135.5ZM153.5 343.5H169.5V359.5H153.5ZM171.5 343.5H187.5V359.5H171.5ZM189.5 343.5H205.5V359.5H189.5ZM206.5 343.5H223.5V359.5H206.5ZM224.5 343.5H240.5V359.5H224.5ZM242.5 343.5H258.5V359.5H242.5ZM260.5 343.5H276.5V359.5H260.5ZM277.5 343.5H294.5V359.5H277.5ZM295.5 343.5H311.5V359.5H295.5ZM313.5 343.5H329.5V359.5H313.5ZM331.5 343.5H347.5V359.5H331.5ZM349.5 343.5H365.5V359.5H349.5ZM366.5 343.5H382.5V359.5H366.5ZM384.5 343.5H400.5V359.5H384.5ZM402.5 343.5H418.5V359.5H402.5ZM420.5 343.5H436.5V359.5H420.5ZM437.5 343.5H454.5V359.5H437.5ZM455.5 343.5H471.5V359.5H455.5ZM473.5 343.5H489.5V359.5H473.5ZM491.5 343.5H507.5V359.5H491.5ZM508.5 343.5H525.5V359.5H508.5ZM526.5 343.5H542.5V359.5H526.5ZM544.5 343.5H560.5V359.5H544.5ZM562.5 343.5H578.5V359.5H562.5ZM580.5 343.5H596.5V359.5H580.5ZM597.5 343.5H613.5V359.5H597.5ZM615.5 343.5H631.5V359.5H615.5ZM633.5 343.5H649.5V359.5H633.5ZM651.5 343.5H667.5V359.5H651.5ZM668.5 343.5H685.5V359.5H668.5ZM686.5 343.5H702.5V359.5H686.5ZM704.5 343.5H720.5V359.5H704.5ZM722.5 343.5H738.5V359.5H722.5ZM739.5 343.5H756.5V359.5H739.5ZM757.5 343.5H773.5V359.5H757.5ZM775.5 343.5H791.5V359.5H775.5ZM793.5 343.5H809.5V359.5H793.5ZM811.5 343.5H827.5V359.5H811.5ZM828.5 343.5H844.5V359.5H828.5ZM846.5 343.5H862.5V359.5H846.5ZM20.5 361.5H36.5V377.5H20.5ZM38.5 361.5H54.5V377.5H38.5ZM55.5 361.5H71.5V377.5H55.5ZM73.5 361.5H89.5V377.5H73.5ZM91.5 361.5H107.5V377.5H91.5ZM109.5 361.5H125.5V377.5H109.5ZM126.5 361.5H143.5V377.5H126.5ZM144.5 361.5H160.5V377.5H144.5ZM162.5 361.5H178.5V377.5H162.5ZM180.5 361.5H196.5V377.5H180.5ZM197.5 361.5H214.5V377.5H197.5ZM215.5 361.5H231.5V377.5H215.5ZM233.5 361.5H249.5V377.5H233.5ZM251.5 361.5H267.5V377.5H251.5ZM269.5 361.5H285.5V377.5H269.5ZM286.5 361.5H302.5V377.5H286.5ZM304.5 361.5H320.5V377.5H304.5ZM322.5 361.5H338.5V377.5H322.5ZM340.5 361.5H356.5V377.5H340.5ZM357.5 361.5H374.5V377.5H357.5ZM375.5 361.5H391.5V377.5H375.5ZM393.5 361.5H409.5V377.5H393.5ZM411.5 361.5H427.5V377.5H411.5ZM428.5 361.5H445.5V377.5H428.5ZM446.5 361.5H462.5V377.5H446.5ZM464.5 361.5H480.5V377.5H464.5ZM482.5 361.5H498.5V377.5H482.5ZM500.5 361.5H516.5V377.5H500.5ZM517.5 361.5H534.5V377.5H517.5ZM535.5 361.5H551.5V377.5H535.5ZM553.5 361.5H569.5V377.5H553.5ZM571.5 361.5H587.5V377.5H571.5ZM588.5 361.5H605.5V377.5H588.5ZM606.5 361.5H622.5V377.5H606.5ZM624.5 361.5H640.5V377.5H624.5ZM642.5 361.5H658.5V377.5H642.5ZM659.5 361.5H676.5V377.5H659.5ZM677.5 361.5H693.5V377.5H677.5ZM695.5 361.5H711.5V377.5H695.5ZM713.5 361.5H729.5V377.5H713.5ZM731.5 361.5H747.5V377.5H731.5ZM748.5 361.5H765.5V377.5H748.5ZM766.5 361.5H782.5V377.5H766.5ZM784.5 361.5H800.5V377.5H784.5ZM802.5 361.5H818.5V377.5H802.5ZM819.5 361.5H836.5V377.5H819.5ZM837.5 361.5H853.5V377.5H837.5ZM29.5 379.5H45.5V395.5H29.5ZM46.5 379.5H63.5V395.5H46.5ZM64.5 379.5H80.5V395.5H64.5ZM82.5 379.5H98.5V395.5H82.5ZM100.5 379.5H116.5V395.5H100.5ZM118.5 379.5H134.5V395.5H118.5ZM135.5 379.5H151.5V395.5H135.5ZM153.5 379.5H169.5V395.5H153.5ZM171.5 379.5H187.5V395.5H171.5ZM189.5 379.5H205.5V395.5H189.5ZM206.5 379.5H223.5V395.5H206.5ZM224.5 379.5H240.5V395.5H224.5ZM242.5 379.5H258.5V395.5H242.5ZM260.5 379.5H276.5V395.5H260.5ZM277.5 379.5H294.5V395.5H277.5ZM295.5 379.5H311.5V395.5H295.5ZM313.5 379.5H329.5V395.5H313.5ZM331.5 379.5H347.5V395.5H331.5ZM349.5 379.5H365.5V395.5H349.5ZM366.5 379.5H382.5V395.5H366.5ZM384.5 379.5H400.5V395.5H384.5ZM402.5 379.5H418.5V395.5H402.5ZM420.5 379.5H436.5V395.5H420.5ZM437.5 379.5H454.5V395.5H437.5ZM455.5 379.5H471.5V395.5H455.5ZM473.5 379.5H489.5V395.5H473.5ZM491.5 379.5H507.5V395.5H491.5ZM508.5 379.5H525.5V395.5H508.5ZM526.5 379.5H542.5V395.5H526.5ZM544.5 379.5H560.5V395.5H544.5ZM562.5 379.5H578.5V395.5H562.5ZM580.5 379.5H596.5V395.5H580.5ZM597.5 379.5H613.5V395.5H597.5ZM615.5 379.5H631.5V395.5H615.5ZM633.5 379.5H649.5V395.5H633.5ZM651.5 379.5H667.5V395.5H651.5ZM668.5 379.5H685.5V395.5H668.5ZM686.5 379.5H702.5V395.5H686.5ZM704.5 379.5H720.5V395.5H704.5ZM722.5 379.5H738.5V395.5H722.5ZM739.5 379.5H756.5V395.5H739.5ZM757.5 379.5H773.5V395.5H757.5ZM775.5 379.5H791.5V395.5H775.5ZM793.5 379.5H809.5V395.5H793.5ZM811.5 379.5H827.5V395.5H811.5ZM828.5 379.5H844.5V395.5H828.5ZM846.5 379.5H862.5V395.5H846.5ZM20.5 397.5H36.5V413.5H20.5ZM38.5 397.5H54.5V413.5H38.5ZM55.5 397.5H71.5V413.5H55.5ZM73.5 397.5H89.5V413.5H73.5ZM91.5 397.5H107.5V413.5H91.5ZM109.5 397.5H125.5V413.5H109.5ZM126.5 397.5H143.5V413.5H126.5ZM144.5 397.5H160.5V413.5H144.5ZM162.5 397.5H178.5V413.5H162.5ZM180.5 397.5H196.5V413.5H180.5ZM197.5 397.5H214.5V413.5H197.5ZM215.5 397.5H231.5V413.5H215.5ZM233.5 397.5H249.5V413.5H233.5ZM251.5 397.5H267.5V413.5H251.5ZM269.5 397.5H285.5V413.5H269.5ZM286.5 397.5H302.5V413.5H286.5ZM304.5 397.5H320.5V413.5H304.5ZM322.5 397.5H338.5V413.5H322.5ZM340.5 397.5H356.5V413.5H340.5ZM357.5 397.5H374.5V413.5H357.5ZM375.5 397.5H391.5V413.5H375.5ZM393.5 397.5H409.5V413.5H393.5ZM411.5 397.5H427.5V413.5H411.5ZM428.5 397.5H445.5V413.5H428.5ZM446.5 397.5H462.5V413.5H446.5ZM464.5 397.5H480.5V413.5H464.5ZM482.5 397.5H498.5V413.5H482.5ZM500.5 397.5H516.5V413.5H500.5ZM517.5 397.5H534.5V413.5H517.5ZM535.5 397.5H551.5V413.5H535.5ZM553.5 397.5H569.5V413.5H553.5ZM571.5 397.5H587.5V413.5H571.5ZM588.5 397.5H605.5V413.5H588.5ZM606.5 397.5H622.5V413.5H606.5ZM624.5 397.5H640.5V413.5H624.5ZM642.5 397.5H658.5V413.5H642.5ZM659.5 397.5H676.5V413.5H659.5ZM677.5 397.5H693.5V413.5H677.5ZM695.5 397.5H711.5V413.5H695.5ZM713.5 397.5H729.5V413.5H713.5ZM731.5 397.5H747.5V413.5H731.5ZM748.5 397.5H765.5V413.5H748.5ZM766.5 397.5H782.5V413.5H766.5ZM784.5 397.5H800.5V413.5H784.5ZM802.5 397.5H818.5V413.5H802.5ZM819.5 397.5H836.5V413.5H819.5ZM837.5 397.5H853.5V413.5H837.5ZM464.5 361.5H480.5V377.5H464.5ZM482.5 361.5H498.5V377.5H482.5ZM500.5 361.5H516.5V377.5H500.5ZM517.5 361.5H534.5V377.5H517.5ZM535.5 361.5H551.5V377.5H535.5ZM553.5 361.5H569.5V377.5H553.5ZM571.5 361.5H587.5V377.5H571.5ZM588.5 361.5H605.5V377.5H588.5ZM606.5 361.5H622.5V377.5H606.5ZM473.5 379.5H489.5V395.5H473.5ZM491.5 379.5H507.5V395.5H491.5ZM508.5 379.5H525.5V395.5H508.5ZM526.5 379.5H542.5V395.5H526.5ZM544.5 379.5H560.5V395.5H544.5ZM562.5 379.5H578.5V395.5H562.5ZM580.5 379.5H596.5V395.5H580.5ZM597.5 379.5H613.5V395.5H597.5ZM615.5 379.5H631.5V395.5H615.5ZM464.5 397.5H480.5V413.5H464.5ZM482.5 397.5H498.5V413.5H482.5ZM500.5 397.5H516.5V413.5H500.5ZM517.5 397.5H534.5V413.5H517.5ZM535.5 397.5H551.5V413.5H535.5ZM553.5 397.5H569.5V413.5H553.5ZM571.5 397.5H587.5V413.5H571.5ZM588.5 397.5H605.5V413.5H588.5ZM606.5 397.5H622.5V413.5H606.5ZM473.5 414.5H489.5V431.5H473.5ZM491.5 414.5H507.5V431.5H491.5ZM508.5 414.5H525.5V431.5H508.5ZM526.5 414.5H542.5V431.5H526.5ZM544.5 414.5H560.5V431.5H544.5ZM562.5 414.5H578.5V431.5H562.5ZM580.5 414.5H596.5V431.5H580.5ZM597.5 414.5H613.5V431.5H597.5ZM615.5 414.5H631.5V431.5H615.5ZM464.5 432.5H480.5V448.5H464.5ZM482.5 432.5H498.5V448.5H482.5ZM500.5 432.5H516.5V448.5H500.5ZM517.5 432.5H534.5V448.5H517.5ZM535.5 432.5H551.5V448.5H535.5ZM553.5 432.5H569.5V448.5H553.5ZM571.5 432.5H587.5V448.5H571.5ZM588.5 432.5H605.5V448.5H588.5ZM606.5 432.5H622.5V448.5H606.5ZM473.5 450.5H489.5V466.5H473.5ZM491.5 450.5H507.5V466.5H491.5ZM508.5 450.5H525.5V466.5H508.5ZM526.5 450.5H542.5V466.5H526.5ZM544.5 450.5H560.5V466.5H544.5ZM562.5 450.5H578.5V466.5H562.5ZM580.5 450.5H596.5V466.5H580.5ZM597.5 450.5H613.5V466.5H597.5ZM615.5 450.5H631.5V466.5H615.5ZM464.5 468.5H480.5V484.5H464.5ZM482.5 468.5H498.5V484.5H482.5ZM500.5 468.5H516.5V484.5H500.5ZM517.5 468.5H534.5V484.5H517.5ZM535.5 468.5H551.5V484.5H535.5ZM553.5 468.5H569.5V484.5H553.5ZM571.5 468.5H587.5V484.5H571.5ZM588.5 468.5H605.5V484.5H588.5ZM606.5 468.5H622.5V484.5H606.5ZM473.5 485.5H489.5V502.5H473.5ZM491.5 485.5H507.5V502.5H491.5ZM508.5 485.5H525.5V502.5H508.5ZM526.5 485.5H542.5V502.5H526.5ZM544.5 485.5H560.5V502.5H544.5ZM562.5 485.5H578.5V502.5H562.5ZM580.5 485.5H596.5V502.5H580.5ZM597.5 485.5H613.5V502.5H597.5ZM615.5 485.5H631.5V502.5H615.5ZM464.5 503.5H480.5V519.5H464.5ZM482.5 503.5H498.5V519.5H482.5ZM500.5 503.5H516.5V519.5H500.5ZM517.5 503.5H534.5V519.5H517.5ZM535.5 503.5H551.5V519.5H535.5ZM553.5 503.5H569.5V519.5H553.5ZM571.5 503.5H587.5V519.5H571.5ZM588.5 503.5H605.5V519.5H588.5ZM606.5 503.5H622.5V519.5H606.5ZM473.5 521.5H489.5V537.5H473.5ZM491.5 521.5H507.5V537.5H491.5ZM508.5 521.5H525.5V537.5H508.5ZM526.5 521.5H542.5V537.5H526.5ZM544.5 521.5H560.5V537.5H544.5ZM562.5 521.5H578.5V537.5H562.5ZM580.5 521.5H596.5V537.5H580.5ZM597.5 521.5H613.5V537.5H597.5ZM615.5 521.5H631.5V537.5H615.5ZM464.5 539.5H480.5V555.5H464.5ZM482.5 539.5H498.5V555.5H482.5ZM500.5 539.5H516.5V555.5H500.5ZM517.5 539.5H534.5V555.5H517.5ZM535.5 539.5H551.5V555.5H535.5ZM553.5 539.5H569.5V555.5H553.5ZM571.5 539.5H587.5V555.5H571.5ZM588.5 539.5H605.5V555.5H588.5ZM606.5 539.5H622.5V555.5H606.5ZM473.5 557.5H489.5V573.5H473.5ZM491.5 557.5H507.5V573.5H491.5ZM508.5 557.5H525.5V573.5H508.5ZM526.5 557.5H542.5V573.5H526.5ZM544.5 557.5H560.5V573.5H544.5ZM562.5 557.5H578.5V573.5H562.5ZM580.5 557.5H596.5V573.5H580.5ZM597.5 557.5H613.5V573.5H597.5ZM615.5 557.5H631.5V573.5H615.5ZM464.5 574.5H480.5V590.5H464.5ZM482.5 574.5H498.5V590.5H482.5ZM500.5 574.5H516.5V590.5H500.5ZM517.5 574.5H534.5V590.5H517.5ZM535.5 574.5H551.5V590.5H535.5ZM553.5 574.5H569.5V590.5H553.5ZM571.5 574.5H587.5V590.5H571.5ZM588.5 574.5H605.5V590.5H588.5ZM606.5 574.5H622.5V590.5H606.5ZM473.5 592.5H489.5V608.5H473.5ZM491.5 592.5H507.5V608.5H491.5ZM508.5 592.5H525.5V608.5H508.5ZM526.5 592.5H542.5V608.5H526.5ZM544.5 592.5H560.5V608.5H544.5ZM562.5 592.5H578.5V608.5H562.5ZM580.5 592.5H596.5V608.5H580.5ZM597.5 592.5H613.5V608.5H597.5ZM615.5 592.5H631.5V608.5H615.5ZM464.5 610.5H480.5V626.5H464.5ZM482.5 610.5H498.5V626.5H482.5ZM500.5 610.5H516.5V626.5H500.5ZM517.5 610.5H534.5V626.5H517.5ZM535.5 610.5H551.5V626.5H535.5ZM553.5 610.5H569.5V626.5H553.5ZM571.5 610.5H587.5V626.5H571.5ZM588.5 610.5H605.5V626.5H588.5ZM606.5 610.5H622.5V626.5H606.5ZM473.5 628.5H489.5V644.5H473.5ZM491.5 628.5H507.5V644.5H491.5ZM508.5 628.5H525.5V644.5H508.5ZM526.5 628.5H542.5V644.5H526.5ZM544.5 628.5H560.5V644.5H544.5ZM562.5 628.5H578.5V644.5H562.5ZM580.5 628.5H596.5V644.5H580.5ZM597.5 628.5H613.5V644.5H597.5ZM615.5 628.5H631.5V644.5H615.5ZM464.5 645.5H480.5V662.5H464.5ZM482.5 645.5H498.5V662.5H482.5ZM500.5 645.5H516.5V662.5H500.5ZM517.5 645.5H534.5V662.5H517.5ZM535.5 645.5H551.5V662.5H535.5ZM553.5 645.5H569.5V662.5H553.5ZM571.5 645.5H587.5V662.5H571.5ZM588.5 645.5H605.5V662.5H588.5ZM606.5 645.5H622.5V662.5H606.5ZM473.5 663.5H489.5V679.5H473.5ZM491.5 663.5H507.5V679.5H491.5ZM508.5 663.5H525.5V679.5H508.5ZM526.5 663.5H542.5V679.5H526.5ZM544.5 663.5H560.5V679.5H544.5ZM562.5 663.5H578.5V679.5H562.5ZM580.5 663.5H596.5V679.5H580.5ZM597.5 663.5H613.5V679.5H597.5ZM615.5 663.5H631.5V679.5H615.5ZM464.5 681.5H480.5V697.5H464.5ZM482.5 681.5H498.5V697.5H482.5ZM500.5 681.5H516.5V697.5H500.5ZM517.5 681.5H534.5V697.5H517.5ZM535.5 681.5H551.5V697.5H535.5ZM553.5 681.5H569.5V697.5H553.5ZM571.5 681.5H587.5V697.5H571.5ZM588.5 681.5H605.5V697.5H588.5ZM606.5 681.5H622.5V697.5H606.5ZM473.5 699.5H489.5V715.5H473.5ZM491.5 699.5H507.5V715.5H491.5ZM508.5 699.5H525.5V715.5H508.5ZM526.5 699.5H542.5V715.5H526.5ZM544.5 699.5H560.5V715.5H544.5ZM562.5 699.5H578.5V715.5H562.5ZM580.5 699.5H596.5V715.5H580.5ZM597.5 699.5H613.5V715.5H597.5ZM615.5 699.5H631.5V715.5H615.5ZM464.5 716.5H480.5V733.5H464.5ZM482.5 716.5H498.5V733.5H482.5ZM500.5 716.5H516.5V733.5H500.5ZM517.5 716.5H534.5V733.5H517.5ZM535.5 716.5H551.5V733.5H535.5ZM553.5 716.5H569.5V733.5H553.5ZM571.5 716.5H587.5V733.5H571.5ZM588.5 716.5H605.5V733.5H588.5ZM606.5 716.5H622.5V733.5H606.5ZM473.5 734.5H489.5V750.5H473.5ZM491.5 734.5H507.5V750.5H491.5ZM508.5 734.5H525.5V750.5H508.5ZM526.5 734.5H542.5V750.5H526.5ZM544.5 734.5H560.5V750.5H544.5ZM562.5 734.5H578.5V750.5H562.5ZM580.5 734.5H596.5V750.5H580.5ZM597.5 734.5H613.5V750.5H597.5ZM615.5 734.5H631.5V750.5H615.5ZM464.5 752.5H480.5V768.5H464.5ZM482.5 752.5H498.5V768.5H482.5ZM500.5 752.5H516.5V768.5H500.5ZM517.5 752.5H534.5V768.5H517.5ZM535.5 752.5H551.5V768.5H535.5ZM553.5 752.5H569.5V768.5H553.5ZM571.5 752.5H587.5V768.5H571.5ZM588.5 752.5H605.5V768.5H588.5ZM606.5 752.5H622.5V768.5H606.5ZM473.5 770.5H489.5V786.5H473.5ZM491.5 770.5H507.5V786.5H491.5ZM508.5 770.5H525.5V786.5H508.5ZM526.5 770.5H542.5V786.5H526.5ZM544.5 770.5H560.5V786.5H544.5ZM562.5 770.5H578.5V786.5H562.5ZM580.5 770.5H596.5V786.5H580.5ZM597.5 770.5H613.5V786.5H597.5ZM615.5 770.5H631.5V786.5H615.5ZM464.5 788.5H480.5V804.5H464.5ZM482.5 788.5H498.5V804.5H482.5ZM500.5 788.5H516.5V804.5H500.5ZM517.5 788.5H534.5V804.5H517.5ZM535.5 788.5H551.5V804.5H535.5ZM553.5 788.5H569.5V804.5H553.5ZM571.5 788.5H587.5V804.5H571.5ZM588.5 788.5H605.5V804.5H588.5ZM606.5 788.5H622.5V804.5H606.5ZM473.5 805.5H489.5V821.5H473.5ZM491.5 805.5H507.5V821.5H491.5ZM508.5 805.5H525.5V821.5H508.5ZM526.5 805.5H542.5V821.5H526.5ZM544.5 805.5H560.5V821.5H544.5ZM562.5 805.5H578.5V821.5H562.5ZM580.5 805.5H596.5V821.5H580.5ZM597.5 805.5H613.5V821.5H597.5ZM615.5 805.5H631.5V821.5H615.5ZM464.5 823.5H480.5V839.5H464.5ZM482.5 823.5H498.5V839.5H482.5ZM500.5 823.5H516.5V839.5H500.5ZM517.5 823.5H534.5V839.5H517.5ZM535.5 823.5H551.5V839.5H535.5ZM553.5 823.5H569.5V839.5H553.5ZM571.5 823.5H587.5V839.5H571.5ZM588.5 823.5H605.5V839.5H588.5ZM606.5 823.5H622.5V839.5H606.5ZM473.5 841.5H489.5V857.5H473.5ZM491.5 841.5H507.5V857.5H491.5ZM508.5 841.5H525.5V857.5H508.5ZM526.5 841.5H542.5V857.5H526.5ZM544.5 841.5H560.5V857.5H544.5ZM562.5 841.5H578.5V857.5H562.5ZM580.5 841.5H596.5V857.5H580.5ZM597.5 841.5H613.5V857.5H597.5ZM615.5 841.5H631.5V857.5H615.5ZM464.5 859.5H480.5V875.5H464.5ZM482.5 859.5H498.5V875.5H482.5ZM500.5 859.5H516.5V875.5H500.5ZM517.5 859.5H534.5V875.5H517.5ZM535.5 859.5H551.5V875.5H535.5ZM553.5 859.5H569.5V875.5H553.5ZM571.5 859.5H587.5V875.5H571.5ZM588.5 859.5H605.5V875.5H588.5ZM606.5 859.5H622.5V875.5H606.5ZM473.5 876.5H489.5V893.5H473.5ZM491.5 876.5H507.5V893.5H491.5ZM508.5 876.5H525.5V893.5H508.5ZM526.5 876.5H542.5V893.5H526.5ZM544.5 876.5H560.5V893.5H544.5ZM562.5 876.5H578.5V893.5H562.5ZM580.5 876.5H596.5V893.5H580.5ZM597.5 876.5H613.5V893.5H597.5ZM615.5 876.5H631.5V893.5H615.5ZM464.5 894.5H480.5V910.5H464.5ZM482.5 894.5H498.5V910.5H482.5ZM500.5 894.5H516.5V910.5H500.5ZM517.5 894.5H534.5V910.5H517.5ZM535.5 894.5H551.5V910.5H535.5ZM553.5 894.5H569.5V910.5H553.5ZM571.5 894.5H587.5V910.5H571.5ZM588.5 894.5H605.5V910.5H588.5ZM606.5 894.5H622.5V910.5H606.5ZM473.5 912.5H489.5V928.5H473.5ZM491.5 912.5H507.5V928.5H491.5ZM508.5 912.5H525.5V928.5H508.5ZM526.5 912.5H542.5V928.5H526.5ZM544.5 912.5H560.5V928.5H544.5ZM562.5 912.5H578.5V928.5H562.5ZM580.5 912.5H596.5V928.5H580.5ZM597.5 912.5H613.5V928.5H597.5ZM615.5 912.5H631.5V928.5H615.5ZM464.5 930.5H480.5V946.5H464.5ZM482.5 930.5H498.5V946.5H482.5ZM500.5 930.5H516.5V946.5H500.5ZM517.5 930.5H534.5V946.5H517.5ZM535.5 930.5H551.5V946.5H535.5ZM553.5 930.5H569.5V946.5H553.5ZM571.5 930.5H587.5V946.5H571.5ZM588.5 930.5H605.5V946.5H588.5ZM606.5 930.5H622.5V946.5H606.5ZM473.5 947.5H489.5V964.5H473.5ZM491.5 947.5H507.5V964.5H491.5ZM508.5 947.5H525.5V964.5H508.5ZM526.5 947.5H542.5V964.5H526.5ZM544.5 947.5H560.5V964.5H544.5ZM562.5 947.5H578.5V964.5H562.5ZM580.5 947.5H596.5V964.5H580.5ZM597.5 947.5H613.5V964.5H597.5ZM615.5 947.5H631.5V964.5H615.5ZM464.5 965.5H480.5V981.5H464.5ZM482.5 965.5H498.5V981.5H482.5ZM500.5 965.5H516.5V981.5H500.5ZM517.5 965.5H534.5V981.5H517.5ZM535.5 965.5H551.5V981.5H535.5ZM553.5 965.5H569.5V981.5H553.5ZM571.5 965.5H587.5V981.5H571.5ZM588.5 965.5H605.5V981.5H588.5ZM606.5 965.5H622.5V981.5H606.5ZM473.5 983.5H489.5V999.5H473.5ZM491.5 983.5H507.5V999.5H491.5ZM508.5 983.5H525.5V999.5H508.5ZM526.5 983.5H542.5V999.5H526.5ZM544.5 983.5H560.5V999.5H544.5ZM562.5 983.5H578.5V999.5H562.5ZM580.5 983.5H596.5V999.5H580.5ZM597.5 983.5H613.5V999.5H597.5ZM615.5 983.5H631.5V999.5H615.5ZM464.5 1001.5H480.5V1017.5H464.5ZM482.5 1001.5H498.5V1017.5H482.5ZM500.5 1001.5H516.5V1017.5H500.5ZM517.5 1001.5H534.5V1017.5H517.5ZM535.5 1001.5H551.5V1017.5H535.5ZM553.5 1001.5H569.5V1017.5H553.5ZM571.5 1001.5H587.5V1017.5H571.5ZM588.5 1001.5H605.5V1017.5H588.5ZM606.5 1001.5H622.5V1017.5H606.5Z" fill="none" stroke="#00b050" stroke-width="1"/></g><path d="M850 160 H1920 V323 H891 V284 H850 Z" fill="url(#tile)"/><path d="M660 398 H1128 V399 H1903 V374 H1920 V998 H620 V446 H660 Z" fill="url(#parq)"/><path d="M585 323 H816 V287 H832 V339.7 H601.7 V877 H585 Z" fill="#fff"/><path d="M585 323 H816 V287 H832 V339.7 H601.7 V877 H585 Z" fill="url(#hb)"/><path d="M601.7 339.7 H832 V287 H848.6 V355.9 H617.2 V877 H601.7 Z" fill="#fff"/><rect x="617.2" y="339.7" width="231.4" height="16.2" fill="url(#hx)"/><rect x="832" y="287" width="16.6" height="52.7" fill="url(#hxv2)"/><rect x="601.7" y="339.7" width="15.5" height="537.3" fill="url(#hxv)"/><path d="M617.2 355.9 H848.6 V287 H888 V355.9 H976.6 V395.5 H657.4 V877 H617.2 Z" fill="#fff"/><path d="M617.2 355.9 H848.6 V287 H888 V355.9 H976.6 V395.5 H657.4 V877 H617.2 Z" fill="url(#ho)"/><rect x="888" y="323" width="88.6" height="16.7" fill="#fff"/><rect x="888" y="323" width="88.6" height="16.7" fill="url(#hb)"/><rect x="888" y="339.7" width="88.6" height="16.2" fill="#fff"/><rect x="888" y="339.7" width="88.6" height="16.2" fill="url(#hx)"/><path d="M585 877 V323 H816 V287 H832" fill="none" stroke="#b3121a" stroke-width="1.5"/><path d="M888 323 H976.6 V339.7" fill="none" stroke="#b3121a" stroke-width="1.5"/><path d="M976.6 339.7 V355.9" stroke="#d89c2a"/><path d="M976.6 355.9 V395.5" stroke="#1e6e1e" stroke-width="1.1"/><path d="M601.7 998 V339.7 H832 V287" fill="none" stroke="#d89c2a" stroke-width="1"/><path d="M888 339.7 H976.6" fill="none" stroke="#d89c2a" stroke-width="1"/><path d="M617.2 998 V355.9 H848.6 V287 H888 V355.9 H976.6" fill="none" stroke="#1e6e1e" stroke-width="1"/><path d="M657.4 998 V395.5 H976.6" fill="none" stroke="#1e6e1e" stroke-width="1"/><path d="M660 398.5 H1128" fill="none" stroke="#5a6ab0" stroke-width="1"/><path d="M891 323 V284 H850" fill="none" stroke="#5a6ab0" stroke-width="1"/><rect x="832" y="160" width="18" height="127" fill="#fff"/><path d="M832.5 160 V287 M850.5 160 V279 M832 279 H1008" fill="none" stroke="#ff6a10" stroke-width="1.2"/><path d="M953 160 A 175 175 0 0 1 1008 279" fill="none" stroke="#ff6a10" stroke-width="1.2"/><rect x="977" y="323" width="151" height="76" fill="#fff"/><path d="M977 323.5 H984.5 V398.5 H977" fill="none" stroke="#ff6a10" stroke-width="1.2"/><path d="M1000 348.5 H1143" fill="none" stroke="#ff6a10" stroke-width="1.2"/><path d="M1135 344.5 H1128.5 V323.5 H1135 M1135 352.5 H1128.5 V398.5 H1135" fill="none" stroke="#ff6a10" stroke-width="1.2"/><rect x="1135" y="323" width="768" height="16.6" fill="#fff"/><rect x="1135" y="323" width="768" height="16.6" fill="url(#hb)"/><rect x="1135" y="339.6" width="768" height="16" fill="#fff"/><rect x="1275" y="339.6" width="628" height="16" fill="url(#hx)"/><rect x="1135" y="355.6" width="768" height="39.8" fill="#fff"/><rect x="1135" y="355.6" width="768" height="39.8" fill="url(#ho)"/><path d="M1135 323 H1903 V395" fill="none" stroke="#b3121a" stroke-width="1.5"/><path d="M1135 339.6 H1903" fill="none" stroke="#d89c2a" stroke-width="1"/><path d="M1135 355.6 H1903 M1135 395.4 H1903" fill="none" stroke="#1e6e1e" stroke-width="1"/><path d="M1135 399 H1903" fill="none" stroke="#5a6ab0" stroke-width="1"/><rect x="1135.5" y="340" width="139.5" height="15.5" fill="#fff"/><path d="M1135.5 340 H1275 M1135.5 344.5 H1275 V352.5 H1135.5 M1135.5 355.5 H1275" fill="none" stroke="#ff6a10" stroke-width="1.1"/><path d="M1135.5 323 V340" stroke="#b3121a" stroke-width="1.3"/><path d="M1135.5 355.5 V395.5" stroke="#1e6e1e" stroke-width="1.1"/><path d="M1903 374 H1912 V323 M1920 300 A 60 60 0 0 0 1905 374" fill="none" stroke="#ff6a10" stroke-width="1.2"/><rect x="1457" y="160" width="14" height="163" fill="#fff"/><path d="M1457.2 160 V323 M1471 160 V323" stroke="#dcc070" stroke-width="1.6"/><rect x="1650" y="195" width="14" height="128" fill="#fff"/><path d="M1649.8 203 V323 M1663.6 203 V323" stroke="#dcc070" stroke-width="1.6"/><rect x="1644" y="160" width="22" height="35" fill="#fff"/><path d="M1644 195 H1663 V202 H1644 Z" fill="#fff" stroke="#ff6a10" stroke-width="1"/><path d="M1663 195 Q1740 190 1750 160" fill="none" stroke="#ff6a10" stroke-width="1"/><rect x="601.5" y="877" width="56" height="121" fill="#fff"/><rect x="620" y="878" width="40" height="120" fill="url(#parq)"/><path d="M601.5 877 V998 M601.5 881 H620 V877" fill="none" stroke="#ff6a10" stroke-width="1.3"/><path d="M620 878.5 H660" stroke="#5a6ab0" stroke-width="1"/><path d="M124 160 V998 M751.6 160 V415 M930.6 160 V998 M751.6 415 H1920" stroke="#f9c99a" stroke-width="1"/><path d="M497 222.5 H1920 M497 235 H1920" stroke="#c87878" stroke-width="1" stroke-dasharray="45 17.6" stroke-dashoffset="1.4" opacity="0.85"/><path d="M497.5 210 V998" stroke="#d89090" stroke-width="1"/><path d="M751 125 A31.5 31.5 0 0 0 751 188 A31.0 31.0 0 0 0 751 250 A36.0 36.0 0 0 0 751 322 A46.2 46.2 0 0 0 751 414.4" fill="none" stroke="#ff1010" stroke-width="1.1"/><path d="M751 414.4 A47.0 47.0 0 0 0 844.7 417 A45.4 45.4 0 0 0 935.3 417 A32.7 32.7 0 0 0 1000.5 417 A35.0 35.0 0 0 0 1070.3 417 A27.8 27.8 0 0 0 1125.7 417 A37.2 37.2 0 0 0 1200 417 A37.4 37.4 0 0 0 1274.7 417 A31.6 31.6 0 0 0 1337.8 417 A27.9 27.9 0 0 0 1393.5 417 A45.3 45.3 0 0 0 1484 417 A29.4 29.4 0 0 0 1542.6 417 A47.8 47.8 0 0 0 1638 417 A44.8 44.8 0 0 0 1727.4 417 A41.9 41.9 0 0 0 1811 417 A40.4 40.4 0 0 0 1891.6 417 A41.8 41.8 0 0 0 1975 417" fill="none" stroke="#ff1010" stroke-width="1.1"/><path d="M1072 303 H1103 M1095 296 L1103 303 L1095 310" fill="none" stroke="#ff6a10" stroke-width="1.2"/><path d="M1153.5 160 V848" stroke="#6ab4f0" stroke-width="1" stroke-dasharray="70 8 2 8"/><path d="M1320 399 V428" stroke="#6e6e6e" stroke-width="1"/><path d="M1361.7 399 V440" stroke="#6e6e6e" stroke-width="1"/><path d="M1403 399 V440" stroke="#6e6e6e" stroke-width="1"/><path d="M1447 399 V440" stroke="#6e6e6e" stroke-width="1"/><path d="M1489 399 V440" stroke="#6e6e6e" stroke-width="1"/><path d="M1530 399 V440" stroke="#6e6e6e" stroke-width="1"/><path d="M1572 399 V440" stroke="#6e6e6e" stroke-width="1"/><path d="M1616 399 V440" stroke="#6e6e6e" stroke-width="1"/><path d="M1657 399 V440" stroke="#6e6e6e" stroke-width="1"/><path d="M1699 399 V440" stroke="#6e6e6e" stroke-width="1"/><path d="M1741 399 V440" stroke="#6e6e6e" stroke-width="1"/><path d="M1782 399 V440" stroke="#6e6e6e" stroke-width="1"/><path d="M1153 399 L1210 432 M1247 399 L1257 418" stroke="#6e6e6e" stroke-width="0.9"/><text transform="translate(1210.5,419.1) rotate(-90)" font-size="15" fill="#6e6e6e">4</text><text transform="translate(1292.5,419.1) rotate(-90)" font-size="15" fill="#6e6e6e">5</text><text transform="translate(1346.5,419.1) rotate(-90)" font-size="15" fill="#6e6e6e">6</text><text transform="translate(1385.5,419.1) rotate(-90)" font-size="15" fill="#6e6e6e">7</text><text transform="translate(1431.5,419.1) rotate(-90)" font-size="15" fill="#6e6e6e">8</text><text transform="translate(1473.5,419.1) rotate(-90)" font-size="15" fill="#6e6e6e">9</text><text transform="translate(1515.5,423.3) rotate(-90)" font-size="15" fill="#6e6e6e">10</text><text transform="translate(1554.5,423.3) rotate(-90)" font-size="15" fill="#6e6e6e">11</text><text transform="translate(1598.5,423.3) rotate(-90)" font-size="15" fill="#6e6e6e">12</text><text transform="translate(1640.5,423.3) rotate(-90)" font-size="15" fill="#6e6e6e">13</text><text transform="translate(1681.5,423.3) rotate(-90)" font-size="15" fill="#6e6e6e">14</text><text transform="translate(1727.5,423.3) rotate(-90)" font-size="15" fill="#6e6e6e">15</text><text transform="translate(1767.5,423.3) rotate(-90)" font-size="15" fill="#6e6e6e">16</text><path d="M1142.7 411.8 L1361.8 554.4 H1303.4 V612.8 H1142.7 Z" fill="#fff" stroke="#777" stroke-width="0.8"/><path d="M1142.7 498 L1303 565 M1192 444 L1303 555 M1213 477 L1260 487 L1251 532 M1295 511 L1312 555 M1320 527 V555 M1213 438 L1250 462 M1273 461 L1282 482 M1280 476 L1339 475 M1289 488 L1326 513 M1320 475 V507 M1361 488 V535 M1366 537 L1378 545" stroke="#555" stroke-width="0.8" fill="none"/><path d="M1223 613 V552 Q1226 505 1260 487" stroke="#555" stroke-width="0.9" fill="none"/><circle cx="1223" cy="613" r="16" fill="#7a7a7a"/><g fill="#555" font-size="22"><text x="1158" y="463">3</text><text x="1158" y="544">2</text><text x="1158" y="599">1</text></g><text transform="translate(1203,628) rotate(-78.5)" font-size="21.5" fill="#666">17 x 0,176 = 3,000</text><path d="M355 571 H447 M447 571 H1920" stroke="#6cc04a" stroke-width="1" fill="none"/><path d="M621 774 H1920" stroke="#3fae49" stroke-width="2" stroke-dasharray="55 52" fill="none"/><path d="M403 774 H447" stroke="#4ec24e" stroke-width="1.2"/><path d="M355.2 556 V662.6" stroke="#6cc04a" stroke-width="1"/><path d="M355.2 678.5 L403.1 774.3 L307.3 774.3 Z" fill="#3daee3" stroke="#4ec24e" stroke-width="1.2"/><circle cx="355.2" cy="774" r="3.6" fill="#000"/><path d="M124 744.4 L220.3 792.4 L124 840.4" fill="none" stroke="#3a9ae8" stroke-width="1"/><rect x="274.8" y="752.8" width="5.4" height="5.4" fill="#a020a0" transform="rotate(45 277.5 755.5)"/><text transform="translate(188,698.5) rotate(-90)" font-size="66.5" fill="#0000ff">West Elevation</text><text x="139.5" y="753" font-size="67.5" fill="#42a4f4">S-02</text><g fill="#0000ff" font-size="31"><text x="1055" y="179.5">A:</text><text x="1160" y="179.5">7,239 m²</text><text x="1055" y="224">F:</text><text x="1222" y="224">Tiles</text><text x="1471" y="184">A: 1,941 m²</text><text x="1471" y="230">F:</text><text x="1575" y="230">Tiles</text><text x="1683" y="230">A:</text><text x="1835" y="230">3,502</text><text x="1816" y="213" font-size="13">+</text><text x="1683" y="277">F:</text><text x="1895" y="277">Ti</text><text x="1165" y="728">A:</text><text x="1165" y="774">F:</text><text x="1183" y="822" font-size="32.5">13-37 13 00 D</text></g><text x="1686" y="180.5" font-size="58" font-weight="bold" fill="#0000ff">Washroom</text><text x="1165" y="675" font-size="54" font-weight="bold" fill="#0000ff">Exhibition</text><text x="1745" y="719" font-size="42" fill="#0000ff">±0,000</text><g fill="#fff" stroke="#ff00ff" stroke-width="1.1"><ellipse cx="1560" cy="258.5" rx="28" ry="37"/><ellipse cx="1560" cy="259" rx="26.5" ry="35.5" fill="none" stroke-width="0.7"/><path d="M1530.5 323 Q1525 307 1525.5 300 Q1526 295 1532 295 H1588 Q1594 295 1594.5 300 Q1595 307 1589.5 323 Z"/><path d="M1716 323 V290 Q1716 253 1763 252 Q1811 253 1811 290 V323 Z"/><path d="M1727 290 Q1727 262 1763 262 Q1801 262 1801 290 Q1801 308 1763 308 Q1727 308 1727 290 Z"/><ellipse cx="1764" cy="305" rx="3" ry="9"/></g><rect x="774" y="832.7" width="76" height="64.7" fill="#fff" stroke="#1aa33a" stroke-width="1.3"/><path d="M782 832.7 V897.4" stroke="#1aa33a" stroke-width="1.1"/><rect x="774" y="929.5" width="76" height="63.7" fill="#fff" stroke="#1aa33a" stroke-width="1.3"/><path d="M782 929.5 V993.2" stroke="#1aa33a" stroke-width="1.1"/><rect x="918.5" y="832.7" width="76" height="64.7" fill="#fff" stroke="#1aa33a" stroke-width="1.3"/><path d="M926.5 832.7 V897.4" stroke="#1aa33a" stroke-width="1.1"/><rect x="918.5" y="929.5" width="76" height="63.7" fill="#fff" stroke="#1aa33a" stroke-width="1.3"/><path d="M926.5 929.5 V993.2" stroke="#1aa33a" stroke-width="1.1"/><rect x="1062.3" y="832.7" width="76" height="64.7" fill="#fff" stroke="#1aa33a" stroke-width="1.3"/><path d="M1070.3 832.7 V897.4" stroke="#1aa33a" stroke-width="1.1"/><rect x="1062.3" y="929.5" width="76" height="63.7" fill="#fff" stroke="#1aa33a" stroke-width="1.3"/><path d="M1070.3 929.5 V993.2" stroke="#1aa33a" stroke-width="1.1"/><rect x="1206" y="832.7" width="76" height="64.7" fill="#fff" stroke="#1aa33a" stroke-width="1.3"/><path d="M1214 832.7 V897.4" stroke="#1aa33a" stroke-width="1.1"/><rect x="1206" y="929.5" width="76" height="63.7" fill="#fff" stroke="#1aa33a" stroke-width="1.3"/><path d="M1214 929.5 V993.2" stroke="#1aa33a" stroke-width="1.1"/><rect x="1350" y="832.7" width="76" height="64.7" fill="#fff" stroke="#1aa33a" stroke-width="1.3"/><path d="M1358 832.7 V897.4" stroke="#1aa33a" stroke-width="1.1"/><rect x="1350" y="929.5" width="76" height="63.7" fill="#fff" stroke="#1aa33a" stroke-width="1.3"/><path d="M1358 929.5 V993.2" stroke="#1aa33a" stroke-width="1.1"/><path d="M1757 880 V975 M1770 875 H1920 M1770 900 H1920 M1786 900 V975" stroke="#f39a4e" stroke-width="1" fill="none"/><path d="M1154 809 V848 H1117 M1065 848 H1029 V871 M1029 927 V990" stroke="#7ab4ea" stroke-width="1" fill="none"/><path d="M851 876 H910 M851 900 H880 M994 876 H1062 M994 900 H1020 M1138 876 H1206 M1138 900 H1160 M1282 876 H1350 M807 900 V915 M819 900 V915 M951 900 V915 M963 900 V915 M1095 900 V915 M1107 900 V915" stroke="#f39a4e" stroke-width="1" fill="none" opacity="0.9"/><rect x="1900" y="922" width="24" height="76" fill="#fff" stroke="#1aa33a" stroke-width="1.2"/><rect x="1902" y="924" width="18" height="30" fill="#fff" stroke="#1aa33a" stroke-width="1"/><path d="M1714.4 753.2 V737.2 A16 16 0 0 1 1730.4 753.2 Z M1714.4 753.2 H1698.4 A16 16 0 0 0 1714.4 769.2 Z" fill="#3d9cf0"/><path d="M1714.4 769.2 A16 16 0 0 0 1730.4 753.2" fill="none" stroke="#3d9cf0" stroke-width="1.1"/><path d="M1714.4 722 V786 M1714.4 753.2 H1746 M1706 737.2 H1714" stroke="#3d9cf0" stroke-width="1.2"/></g></svg><div class="abs" style="left:0px;top:0px;width:1920px;height:41px;background:#fff"></div><div class="abs" style="left:0px;top:41px;width:1920px;height:97px;background:#f0f0f0"></div><div class="abs" style="left:0px;top:77px;width:1920px;height:1px;background:#dcdcdc"></div><svg class="abs" style="left:3px;top:2px;" width="18" height="18" viewBox="0 0 18 18"><circle cx="9" cy="9" r="7.5" fill="#2f5fc7"/><path d="M3 14 Q6 4 13 4 Q16 6 15 10" fill="none" stroke="#fff" stroke-width="1.3"/><circle cx="15" cy="10" r="0.9" fill="#fff"/></svg><div class="t" style="left:23px;top:5.7px;font-size:11.35px;color:#000;">TS03_complete - ARCHICAD 24</div><svg class="abs" style="left:1798px;top:4px;" width="14" height="12" viewBox="0 0 14 12"><path d="M1 6.5 H11" stroke="#000" stroke-width="1"/></svg><svg class="abs" style="left:1842px;top:3px;" width="14" height="14" viewBox="0 0 14 14"><path d="M4.5 2.5 H11.5 V9.5 H9.5 M2.5 4.5 H9.5 V11.5 H2.5 Z" fill="none" stroke="#000" stroke-width="1"/></svg><svg class="abs" style="left:1889px;top:4px;" width="12" height="12" viewBox="0 0 12 12"><path d="M1 1 L11 11 M11 1 L1 11" stroke="#000" stroke-width="1"/></svg><svg class="abs" style="left:1879px;top:27px;" width="40" height="11" viewBox="0 0 40 11"><path d="M1 8 H8.5" stroke="#222" stroke-width="1.7"/><path d="M17.5 2.5 H21.5 V6.5" fill="none" stroke="#222" stroke-width="0.8"/><rect x="15.5" y="4.5" width="4.5" height="4.5" fill="none" stroke="#222" stroke-width="1.8"/><path d="M28.5 3 L34.5 9 M34.5 3 L28.5 9" stroke="#222" stroke-width="1.8"/></svg><div class="t" style="left:7px;top:27.6px;font-size:11.8px;color:#000;">Arquivo</div><div class="t" style="left:63px;top:27.6px;font-size:11.8px;color:#000;">Edição</div><div class="t" style="left:112px;top:27.6px;font-size:11.8px;color:#000;">Visualização</div><div class="t" style="left:190px;top:27.6px;font-size:11.8px;color:#000;">Modelagem</div><div class="t" style="left:268px;top:27.6px;font-size:11.8px;color:#000;">Documentação</div><div class="t" style="left:363px;top:27.6px;font-size:11.8px;color:#000;">Opções</div><div class="t" style="left:417px;top:27.6px;font-size:11.8px;color:#000;">Teamwork</div><div class="t" style="left:486px;top:27.6px;font-size:11.8px;color:#000;">Janelas</div><div class="t" style="left:537px;top:27.6px;font-size:11.8px;color:#000;">Ajuda</div><svg class="abs" style="left:0;top:42px" width="1000" height="36" viewBox="0 42 1000 36"><path d="M4.5 53 V67" stroke="#555" stroke-width="1"/><path d="M59.5 46.5 V74" stroke="#555" stroke-width="1"/><path d="M142.5 46.5 V74" stroke="#555" stroke-width="1"/><path d="M622.5 46.5 V74" stroke="#555" stroke-width="1"/><path d="M805.5 46.5 V74" stroke="#555" stroke-width="1"/><path d="M894.5 53 V66" stroke="#555" stroke-width="1"/><rect x="194.5" y="44.5" width="91" height="30" fill="#c6def3" stroke="#90c3f0"/><path d="M224.5 45 V74" stroke="#90c3f0"/><path d="M240.5 45 V74" stroke="#90c3f0"/><path d="M270.5 45 V74" stroke="#90c3f0"/><rect x="474.5" y="44.5" width="24" height="30" fill="#c6def3" stroke="#90c3f0"/><path d="M10.5 55.5 V63.5 H18.5" fill="none" stroke="#a6a6a6" stroke-width="1.1"/><path d="M11.5 62.5 Q18 52 24 54 Q30 57 28 62 Q27 64 24 66" fill="none" stroke="#a6a6a6" stroke-width="1.1"/><path d="M53 55.5 V63.5 H45" fill="none" stroke="#a6a6a6" stroke-width="1.1"/><path d="M52 62.5 Q45.5 52 39.5 54 Q33.5 57 35.5 62 Q36.5 64 39.5 66" fill="none" stroke="#a6a6a6" stroke-width="1.1"/><circle cx="74.5" cy="57.5" r="5.3" fill="none" stroke="#1e7ef0" stroke-width="1.1"/><rect x="72" y="55" width="5" height="5" rx="1" fill="#262626"/><path d="M78.3 61.3 L84.5 67.5" stroke="#1e7ef0" stroke-width="1.1"/><path d="M84.5 56.5 V63 M73.5 64.5 V67.5 H80.5" stroke="#262626" stroke-width="1.2" fill="none"/><circle cx="84.5" cy="56" r="1.2" fill="#262626"/><circle cx="73.5" cy="67.5" r="1.2" fill="#262626"/><path d="M94.7 68 L108.5 54.2 Q110.5 52.5 111.3 54.5 Q111.5 56 110 57.5 L96.5 71 Q94.5 72 94 70 Z" fill="none" stroke="#262626" stroke-width="1.1" transform="translate(0,-3)"/><path d="M94.7 65 L101 58.7 L103 60.7 L96.5 67.5 Q94.5 68.5 94.2 66.5 Z" fill="#1e7ef0"/><path d="M101.5 52.5 L108.5 59.5" stroke="#262626" stroke-width="1.1"/><path d="M118.5 69 L122 65.5 M121 66.5 L132.5 55 L135 57.5 L123.5 69 Z" fill="none" stroke="#262626" stroke-width="1.1" transform="translate(0,-2)"/><path d="M121.5 64.5 L126.5 59.5 L128.5 61.5 L123.5 66.5 Z" fill="#1e7ef0"/><path d="M128 52.5 L135 59.5 M131 51 L136.5 56.5" stroke="#262626" stroke-width="1.1"/><path d="M157.7 51.5 L172.5 66.5 H157.7 Z M160.5 60 L165 64 H160.5 Z" fill="none" stroke="#262626" stroke-width="1.3"/><path d="M155.5 51 V68.5 H173" fill="none" stroke="#ff7a00" stroke-width="1.1" stroke-dasharray="2.2 1.6"/><path d="M203 60.5 H209 M212 60.5 H218 M210.5 57 V63.5 M211.5 56.5 L214 59.5 L219 53" fill="none" stroke="#262626" stroke-width="1.1"/><path d="M203 66.5 H218" stroke="#1e7ef0" stroke-width="1.1" stroke-dasharray="2.2 1.6"/><path d="M249 52 L253.5 55.5 L251.5 56 L253.5 58 L252.5 58.5 L250.5 56.5 L249.5 58 Z" fill="#262626"/><rect x="249.5" y="59.5" width="11.5" height="8" rx="1.3" fill="none" stroke="#262626" stroke-width="1.1"/><text x="250.7" y="66.3" font-family="Liberation Sans" font-size="6.5" font-weight="bold" fill="#262626">XY</text><path d="M263 62 H266 M263 65.5 H266" stroke="#262626" stroke-width="1.1"/><path d="M293.5 54.8 H308.5 M293.5 61.2 H308.5 M297.6 50.5 V65.5 M303.8 50.5 V65.5" stroke="#262626" stroke-width="1"/><rect x="295.6" y="53" width="4" height="4" rx="0.6" fill="#262626"/><rect x="301.8" y="53" width="4" height="4" rx="0.6" fill="#262626"/><rect x="295.6" y="59.2" width="4" height="4" rx="0.6" fill="#262626"/><rect x="301.8" y="59.2" width="4" height="4" rx="0.6" fill="#262626"/><path d="M335.5 56 L344 56 L351 62.5 L342.5 62.5 Z M339 59.2 H347.5 M339.5 56 L346.5 62.5" fill="none" stroke="#9cc4f4" stroke-width="0.9"/><path d="M366 51 L372.5 57.5 V65.5 L366 59 Z M366 55 L372.5 61.5 M369.2 54 V62" fill="none" stroke="#9cc4f4" stroke-width="0.9"/><rect x="389.6" y="51.4" width="13.6" height="13.6" rx="1.2" fill="none" stroke="#262626" stroke-width="1.3"/><path d="M392.5 60 V54.5 H398" stroke="#888" stroke-width="0.9" fill="none"/><path d="M392.5 67.5 H405 Q406.5 67.5 406.5 66 V54.5" fill="none" stroke="#1e7ef0" stroke-width="1.2"/><path d="M440.5 55 Q440.5 52 443.5 52 Q446.5 52 446.5 55 Q446.5 56.5 445 57.5 H449.5 Q450 57.5 450 58 V68 H437.5 V58 Q437.5 57.5 438 57.5 H442 Q440.5 56.5 440.5 55 Z" fill="none" stroke="#a6a6a6" stroke-width="1.1"/><rect x="477.5" y="49.5" width="3" height="3" fill="none" stroke="#262626"/><rect x="491" y="55.5" width="3" height="3" fill="none" stroke="#262626"/><path d="M479 52.5 V55 M480.5 51.5 L491 56 M478 59 L490 54" stroke="#262626" stroke-width="1" fill="none"/><rect x="478" y="55" width="10" height="3.5" fill="none" stroke="#262626" transform="rotate(-20 483 57)"/><path d="M477 66.5 H487 M477 63.5 H484 M478 66 L481 63.5 M481 66 L484 63.5" stroke="#262626" stroke-width="1"/><rect x="486" y="59" width="5" height="5" fill="#1e7ef0"/><path d="M492 58 L494 56.5 M492.5 61 H495 M492 64 L494 65.5" stroke="#1e7ef0" stroke-width="0.8"/><path d="M502.5 53 H519.5 M502.5 53 V67 H519.5 M505 53 V56 M508 53 V55 M511 53 V56 M514 53 V55 M517 53 V56" fill="none" stroke="#262626" stroke-width="1.1"/><text x="504.5" y="65.5" font-family="Liberation Sans" font-size="8" font-weight="bold" fill="#262626">1 2</text><path d="M530.5 53.5 L541.5 64.5 M541.5 53.5 L530.5 64.5" stroke="#262626" stroke-width="1.1"/><rect x="533.5" y="56.5" width="5" height="5" fill="#f0f0f0" stroke="#262626" stroke-width="1.1"/><rect x="552.5" y="56.5" width="10" height="9" fill="none" stroke="#aaa" stroke-dasharray="1.5 1.5"/><rect x="557.5" y="51.5" width="10" height="10" fill="none" stroke="#262626" stroke-width="1.1"/><rect x="556.0" y="50.0" width="3" height="3" fill="#f0f0f0" stroke="#262626" stroke-width="1"/><rect x="566.0" y="50.0" width="3" height="3" fill="#f0f0f0" stroke="#262626" stroke-width="1"/><rect x="556.0" y="60.0" width="3" height="3" fill="#f0f0f0" stroke="#262626" stroke-width="1"/><rect x="566.0" y="60.0" width="3" height="3" fill="#f0f0f0" stroke="#262626" stroke-width="1"/><rect x="551.5" y="55.5" width="2" height="2" fill="#f0f0f0" stroke="#aaa" stroke-width="0.8"/><rect x="551.5" y="64.5" width="2" height="2" fill="#f0f0f0" stroke="#aaa" stroke-width="0.8"/><rect x="561.5" y="64.5" width="2" height="2" fill="#f0f0f0" stroke="#aaa" stroke-width="0.8"/><path d="M581 64.5 V59.5 L585 55.5 H591 M581 64.5 H589" fill="none" stroke="#262626" stroke-width="1.1"/><path d="M587 52 L594.5 59.5 L589 65 L581.5 57.5 Z" fill="none" stroke="#1e7ef0" stroke-width="1.2"/><path d="M588 55 L592 59 L589 62 L585 58 Z" fill="none" stroke="#262626" stroke-width="1"/><path d="M632.5 51.5 V54 M632.5 62.5 V68" stroke="#1e7ef0" stroke-width="1.1"/><path d="M632.5 56 V61" stroke="#262626" stroke-width="1.1"/><path d="M634 58 L647 55 M634 60 L647 63" stroke="#262626" stroke-width="1.1"/><circle cx="646.5" cy="56" r="2" fill="none" stroke="#262626" stroke-width="1.1"/><circle cx="646.5" cy="63" r="2" fill="none" stroke="#262626" stroke-width="1.1"/><path d="M656.5 58 Q655.5 54 659.5 53 Q661 51.5 663 53.5 Q665.5 53 665.5 56 Q664 58 662 58 L661 59.5 Q658.5 62 656.5 58 Z M662.5 57.5 L669 64.5" fill="none" stroke="#262626" stroke-width="1.2"/><path d="M681 51.5 H697" stroke="#1e7ef0" stroke-width="1.1"/><path d="M689 54 V63 M686 56.5 L689 53.5 L692 56.5 M683 61.5 V67 M686.5 61.5 V67 M690 61.5 V67 M693.5 61.5 V67" fill="none" stroke="#262626" stroke-width="1.1"/><path d="M706 67 V53.5 H721 M719 51.5 V56 M704 66 H708" fill="none" stroke="#262626" stroke-width="1.1"/><path d="M731 67 Q733 54 746 53 M744 51 V56 M729 65 H733" fill="none" stroke="#262626" stroke-width="1.1"/><path d="M733 66 Q737 57 744 55" fill="none" stroke="#999" stroke-width="0.8"/><path d="M757.5 51.5 H772.5 V67.5 H762" fill="none" stroke="#262626" stroke-width="1.1"/><path d="M757.5 51.5 V67.5 H762 V61.5 H757.5" fill="none" stroke="#999" stroke-width="1"/><path d="M762.5 58 V52.5 M760.5 54.5 L762.5 52.5 L764.5 54.5 M766 62.5 H771.5 M769.5 60.5 L771.5 62.5 L769.5 64.5" fill="none" stroke="#262626" stroke-width="1"/><rect x="784.5" y="51.5" width="11" height="16.5" rx="1" fill="none" stroke="#c8c8c8"/><path d="M782 62 L790 54 L798 62 M784.5 60 V68 H795.5 V60" fill="none" stroke="#a6a6a6" stroke-width="1.3"/><path d="M816.5 68 V53.5 H826.5 L822.5 57.5 L826.5 60.5 H816.5" fill="none" stroke="#262626" stroke-width="1.1"/><path d="M841.5 68 V53.5 H851.5 L848 56.5 L849.5 58" fill="none" stroke="#262626" stroke-width="1.1"/><path d="M841.5 60.5 H846" stroke="#262626" stroke-width="1.1"/><rect x="848" y="59.5" width="2" height="2" fill="#1e7ef0"/><rect x="851" y="59.5" width="5.5" height="2" fill="#1e7ef0"/><rect x="848" y="62.5" width="2" height="2" fill="#1e7ef0"/><rect x="851" y="62.5" width="5.5" height="2" fill="#1e7ef0"/><rect x="848" y="65.5" width="2" height="2" fill="#1e7ef0"/><rect x="851" y="65.5" width="5.5" height="2" fill="#1e7ef0"/><path d="M871.5 67 Q865.5 66 865 61.5 Q864.5 57 868 56 Q868.5 51.5 873 51.5 Q878 51.5 879 56 Q881 57 881 60" fill="none" stroke="#262626" stroke-width="1.1"/><rect x="872.5" y="59.5" width="9.5" height="9" rx="1" fill="#fff" stroke="#1e7ef0" stroke-width="1.2"/><path d="M874.5 63 H880 M874.5 65.5 H880" stroke="#1e7ef0" stroke-width="0.9"/><path d="M906.5 67.5 V56 L909.5 53 H920 V64.5 L917.5 67 M906.5 56 H917 V67.5 M917 56 L920 53 M906.5 59.5 H917 M909.5 56 V59.5" fill="none" stroke="#262626" stroke-width="1.1"/><path d="M952.5 67.5 V56 L955.5 53 H966 V60 M952.5 56 H963 V59 M963 56 L966 53 M952.5 59.5 H962 M955.5 56 V59.5" fill="none" stroke="#262626" stroke-width="1.1"/><rect x="958.5" y="59.5" width="9.5" height="9" rx="1" fill="#fff" stroke="#1e7ef0" stroke-width="1.2"/><path d="M960.5 63 H966 M960.5 65.5 H966" stroke="#1e7ef0" stroke-width="0.9"/><path d="M182.8 57.5 H190.2 L186.5 61.5 Z" fill="#1a1a1a"/><path d="M228.8 57.5 H236.2 L232.5 61.5 Z" fill="#1a1a1a"/><path d="M274.8 57.5 H282.2 L278.5 61.5 Z" fill="#1a1a1a"/><path d="M320.8 57.5 H328.2 L324.5 61.5 Z" fill="#1a1a1a"/><path d="M416.8 57.5 H424.2 L420.5 61.5 Z" fill="#1a1a1a"/><path d="M608.8 57.5 H616.2 L612.5 61.5 Z" fill="#1a1a1a"/><path d="M935.8 57.5 H943.2 L939.5 61.5 Z" fill="#1a1a1a"/><path d="M462.8 57.5 H470.2 L466.5 61.5 Z" fill="#888"/></svg><div class="abs" style="left:190px;top:78px;width:1px;height:59px;background:#b8b8b8"></div><div class="abs" style="left:374px;top:78px;width:1px;height:59px;background:#b8b8b8"></div><div class="abs" style="left:559px;top:78px;width:1px;height:59px;background:#b8b8b8"></div><div class="abs" style="left:744px;top:78px;width:1px;height:59px;background:#b8b8b8"></div><div class="abs" style="left:929px;top:78px;width:1px;height:59px;background:#b8b8b8"></div><div class="abs" style="left:1114px;top:78px;width:1px;height:59px;background:#b8b8b8"></div><div class="abs" style="left:1299px;top:78px;width:1px;height:59px;background:#b8b8b8"></div><div class="abs" style="left:1484px;top:78px;width:1px;height:59px;background:#b8b8b8"></div><div class="abs" style="left:1669px;top:78px;width:1px;height:59px;background:#b8b8b8"></div><div class="abs" style="left:1854px;top:78px;width:1px;height:59px;background:#b8b8b8"></div><div class="t" style="left:9px;top:83.0px;font-size:8.8px;color:#000;letter-spacing:-0.15px">Nome de Corte e ID:</div><div class="t" style="left:194px;top:83.0px;font-size:8.8px;color:#000;letter-spacing:-0.15px">Principal:</div><div class="t" style="left:379px;top:83.0px;font-size:8.8px;color:#000;letter-spacing:-0.15px">Vegetal:</div><div class="t" style="left:564px;top:83.0px;font-size:8.8px;color:#000;letter-spacing:-0.15px">Método de Geometria:</div><div class="t" style="left:749px;top:83.0px;font-size:8.8px;color:#000;letter-spacing:-0.15px">Alcance Horizontal:</div><div class="t" style="left:934px;top:83.0px;font-size:8.8px;color:#000;letter-spacing:-0.15px">Alcance Vertical:</div><div class="t" style="left:1119px;top:83.0px;font-size:8.8px;color:#000;letter-spacing:-0.15px">Tipo de Marcador:</div><div class="t" style="left:1304px;top:83.0px;font-size:8.8px;color:#000;letter-spacing:-0.15px">Com Marcador referência a:</div><div class="t" style="left:1489px;top:83.0px;font-size:8.8px;color:#000;letter-spacing:-0.15px">Percurso:</div><div class="t" style="left:1674px;top:83.0px;font-size:8.8px;color:#000;letter-spacing:-0.15px">Estado da Vista do Corte:</div><div class="t" style="left:1859px;top:83.0px;font-size:8.8px;color:#000;letter-spacing:-0.15px">Marcador:</div><div class="abs" style="left:4px;top:97px;width:1px;height:20px;background:#888"></div><div class="t" style="left:9px;top:99.8px;font-size:11.3px;color:#000;">ID:</div><div class="t" style="left:9px;top:120.8px;font-size:11.3px;color:#000;">Nome:</div><div class="abs" style="left:53px;top:96px;width:132px;height:19px;background:#fff;border:1px solid #7a7a7a"></div><div class="abs" style="left:53px;top:117px;width:132px;height:19px;background:#fff;border:1px solid #7a7a7a"></div><div class="t" style="left:57px;top:99.8px;font-size:11.3px;color:#000;">S-02</div><div class="t" style="left:57px;top:120.8px;font-size:11.3px;color:#000;">Building Section</div><div class="t" style="left:194px;top:106.0px;font-size:8.8px;color:#000;letter-spacing:-0.15px">Selecionado: 1</div><div class="t" style="left:194px;top:118.0px;font-size:8.8px;color:#000;letter-spacing:-0.15px">Editável: 1</div><div class="abs" style="left:321px;top:102px;width:48px;height:28px;background:#e1e1e1;border:1px solid #adadad"></div><svg class="abs" style="left:325px;top:106px;" width="42" height="20" viewBox="0 0 42 20"><path d="M3 7 L5 4 L7 7 Z M12 14 L14 11 L16 14 Z" fill="#222"/><path d="M2 9 H15 V16 H18 M10 16 H18" stroke="#222" stroke-width="1" fill="none"/><path d="M23 3 V18" stroke="#aaa"/><path d="M26 9 H34 L30 13 Z" fill="#333"/></svg><div class="abs" style="left:380px;top:102px;width:174px;height:28px;background:#e1e1e1;border:1px solid #adadad"></div><svg class="abs" style="left:387px;top:109px;" width="18" height="14" viewBox="0 0 18 14"><path d="M1 7 Q9 -1 17 7 Q9 15 1 7 Z" fill="none" stroke="#333" stroke-width="1.1"/><circle cx="9" cy="7" r="2.5" fill="none" stroke="#333" stroke-width="1.1"/></svg><div class="t" style="left:407px;top:109.8px;font-size:11.3px;color:#000;">Marker - Section</div><svg class="abs" style="left:545px;top:112px;" width="6" height="8" viewBox="0 0 6 8"><path d="M1 0 V8 L5 4 Z" fill="#222"/></svg><svg class="abs" style="left:572px;top:108px;" width="70" height="16" viewBox="0 0 70 16"><path d="M3 8 H24" stroke="#999" stroke-width="1"/><path d="M46 5 H56 V11 H64" stroke="#999" stroke-width="1" fill="none"/><path d="M45 5 L47 3 L49 5 Z M60 11 L62 9 L64 11Z" fill="#999"/></svg><div class="abs" style="left:749px;top:101px;width:44px;height:29px;background:#c7e0f4;border:1px solid #99c9ef"></div><svg class="abs" style="left:752px;top:104px;" width="124" height="24" viewBox="0 0 124 24"><path d="M6 7 V15 H21 V19 H30 M31 6 V19" stroke="#222" stroke-width="1" fill="none" stroke-dasharray="2 1.5"/><path d="M6 15 H21" stroke="#222"/><path d="M5 17 L7 14 L9 17 Z M27 19 L29 16 L31 19Z" fill="#222"/><path d="M51 9 H78 V17 M51 9 V15 H78" stroke="#222" fill="none" stroke-dasharray="2 1.5"/><path d="M50 15 L52 12 L54 15 Z M74 17 L76 14 L78 17Z" fill="#222"/><path d="M97 15 H112 V18 H120" stroke="#222" fill="none"/><path d="M96 15 L98 12 L100 15 Z M116 18 L118 15 L120 18Z" fill="#222"/></svg><div class="abs" style="left:935px;top:97px;width:40px;height:38px;background:#e1e1e1;border:1px solid #adadad"></div><svg class="abs" style="left:938px;top:101px;" width="34" height="30" viewBox="0 0 34 30"><path d="M4 5 L16 14 M4 10 L14 18 M8 20 H16 M8 25 H14 M14 14 V28 M17 14 V28 M6 4 L19 12" stroke="#222" stroke-width="1" fill="none"/><path d="M26 3 V11 M23 6 L26 3 L29 6 M26 19 V27 M23 24 L26 27 L29 24" stroke="#222" fill="none"/><circle cx="23.5" cy="15" r="2" fill="none" stroke="#222"/><circle cx="28.5" cy="15" r="2" fill="none" stroke="#222"/></svg><div class="abs" style="left:979px;top:96px;width:111px;height:19px;background:#f0f0f0;border:1px solid #cfcfcf"></div><div class="abs" style="left:979px;top:117px;width:111px;height:19px;background:#f0f0f0;border:1px solid #cfcfcf"></div><div class="t" style="left:983px;top:100.0px;font-size:11px;color:#8a8a8a;">0,00</div><div class="t" style="left:983px;top:121.0px;font-size:11px;color:#8a8a8a;">0,00</div><div class="abs" style="left:1096px;top:109px;width:13px;height:13px;background:#d9d9d9"></div><svg class="abs" style="left:1099px;top:112px;" width="6" height="8" viewBox="0 0 6 8"><path d="M1 0 V8 L5 4 Z" fill="#fff"/></svg><div class="abs" style="left:1119px;top:105px;width:176px;height:22px;background:#fff;border:1px solid #7a7a7a"></div><div class="t" style="left:1126px;top:110.8px;font-size:11.3px;color:#000;">Marcador de origem</div><svg class="abs" style="left:1280px;top:112px;" width="10" height="7" viewBox="0 0 10 7"><path d="M1 1 L5 5 L9 1" fill="none" stroke="#333" stroke-width="1.1"/></svg><div class="abs" style="left:1304px;top:105px;width:156px;height:22px;background:#fff;border:1px solid #7a7a7a"></div><div class="t" style="left:1311px;top:110.8px;font-size:11.3px;color:#000;">O ponto de vista</div><svg class="abs" style="left:1445px;top:112px;" width="10" height="7" viewBox="0 0 10 7"><path d="M1 1 L5 5 L9 1" fill="none" stroke="#333" stroke-width="1.1"/></svg><div class="abs" style="left:1461px;top:105px;width:18px;height:22px;background:#d9d9d9"></div><div class="t" style="left:1465px;top:111.0px;font-size:10px;color:#888;">...</div><div class="abs" style="left:1489px;top:106px;width:176px;height:20px;background:#fff;border:1px solid #7a7a7a;overflow:hidden"><div class="t" style="left:3px;top:4.8px;font-size:11.3px">\Cortes\S-02 Building Section (Re</div></div><div class="abs" style="left:1674px;top:105px;width:176px;height:22px;background:#fff;border:1px solid #7a7a7a"></div><div class="t" style="left:1681px;top:110.8px;font-size:11.3px;color:#000;">Reconstrução...a do Modelo</div><svg class="abs" style="left:1835px;top:112px;" width="10" height="7" viewBox="0 0 10 7"><path d="M1 1 L5 5 L9 1" fill="none" stroke="#333" stroke-width="1.1"/></svg><div class="abs" style="left:1860px;top:102px;width:42px;height:28px;background:#e1e1e1;border:1px solid #adadad"></div><svg class="abs" style="left:1862px;top:108px;" width="38" height="16" viewBox="0 0 38 16"><path d="M4 8 H30" stroke="#222" stroke-width="1.2"/><path d="M4 9 L9 4 L14 9 Z M20 9 L25 4 L30 9 Z" fill="#222"/><path d="M33 4 L36 8 L33 12 Z" fill="#222"/></svg><svg class="abs" style="left:1912px;top:110px;" width="8" height="14" viewBox="0 0 8 14"><path d="M0.5 1 H8 M0.5 1 V13 H8 M2 7 L5 10 L8 5" stroke="#333" fill="none"/></svg><div class="abs" style="left:47px;top:138px;width:1873px;height:22px;background:#d7d7d7"></div><div class="abs" style="left:47px;top:138px;width:26px;height:22px;background:#cdcdcd"></div><svg class="abs" style="left:50px;top:141px;" width="20" height="17" viewBox="0 0 20 17"><rect x="1.5" y="1.5" width="7" height="5" fill="none" stroke="#333"/><rect x="11.5" y="1.5" width="7" height="5" fill="none" stroke="#333"/><rect x="1.5" y="9.5" width="7" height="5" fill="none" stroke="#333"/><rect x="11.5" y="9.5" width="7" height="5" fill="none" stroke="#333"/></svg><div class="abs" style="left:73px;top:138px;width:300px;height:22px;background:#fff"></div><svg class="abs" style="left:78px;top:141px;" width="18" height="16" viewBox="0 0 18 16"><path d="M1.5 1.5 H6.5 V6.5 H16.5 V14.5 H1.5 Z M3 1.5 V4" fill="none" stroke="#333" stroke-width="1"/></svg><div class="t" style="left:97px;top:145.1px;font-size:11.5px;color:#000;">[0. Ground Floor]</div><svg class="abs" style="left:356px;top:145px;" width="9" height="9" viewBox="0 0 9 9"><path d="M1 1 L8 8 M8 1 L1 8" stroke="#111" stroke-width="1.6"/></svg><div class="abs" style="left:672px;top:140px;width:1px;height:18px;background:#b0b0b0"></div><div class="abs" style="left:972px;top:140px;width:1px;height:18px;background:#b0b0b0"></div><div class="abs" style="left:1272px;top:140px;width:1px;height:18px;background:#b0b0b0"></div><svg class="abs" style="left:377px;top:142px;" width="18" height="16" viewBox="0 0 18 16"><path d="M1.5 6 L9 1.5 L16.5 6 V14.5 H1.5 Z M1.5 6 H16.5" fill="none" stroke="#333" stroke-width="1"/></svg><div class="t" style="left:397px;top:145.1px;font-size:11.5px;color:#000;">[S-01 Building Section]</div><svg class="abs" style="left:677px;top:142px;" width="18" height="16" viewBox="0 0 18 16"><path d="M1.5 6 L9 1.5 L16.5 6 V14.5 H1.5 Z M1.5 6 H16.5" fill="none" stroke="#333" stroke-width="1"/></svg><div class="t" style="left:697px;top:145.1px;font-size:11.5px;color:#000;">[S-02 Building Section]</div><svg class="abs" style="left:977px;top:141px;" width="18" height="18" viewBox="0 0 18 18"><path d="M2 3 L9 1.5 V16 L2 14.5 Z M9 1.5 L16 3 V14.5 L9 16" fill="#fff" stroke="#2d8cf0" stroke-width="1.1"/></svg><div class="t" style="left:997px;top:145.1px;font-size:11.5px;color:#000;">(!) Entrance - OpenGL [3D / Tudo]</div><div class="abs" style="left:1870px;top:138px;width:50px;height:22px;background:#ececec"></div><svg class="abs" style="left:1875px;top:142px;" width="45" height="16" viewBox="0 0 45 16"><path d="M3 3 V13 H8 M3 8 H8" stroke="#2d8cf0" fill="none"/><path d="M9 13 V7 L18 3 L27 7 V13 Z M9 7 H27" fill="none" stroke="#2d8cf0" stroke-width="1"/><path d="M34 6 H42 L38 10 Z" fill="#333"/></svg><div class="abs" style="left:0;top:138px;width:47px;height:880px;background:#f0f0f0"></div><div class="abs" style="left:14px;top:142px;width:18px;height:1px;background:#888"></div><svg class="abs" style="left:12px;top:150px;" width="22" height="22" viewBox="0 0 22 22"><path d="M7.5 3 V17.5 L11 14.5 L13.5 20 L15.5 19 L13 13.5 H17.5 Z" fill="#6a6a6a" stroke="#444" stroke-width="1"/></svg><svg class="abs" style="left:12px;top:181px;" width="22" height="22" viewBox="0 0 22 22"><rect x="2.5" y="4.5" width="17" height="14" fill="none" stroke="#333" stroke-width="1.1" stroke-dasharray="2.2 1.6"/></svg><div class="abs" style="left:0;top:212px;width:46px;height:18px;background:#d9d9d9;border-radius:3px"></div><div class="t" style="left:3px;top:214.8px;font-size:11.3px;color:#000;width:43px;overflow:hidden">Modelag</div><svg class="abs" style="left:10px;top:234px;" width="26" height="26" viewBox="0 0 26 26"><g transform="translate(13,13) scale(1.18) translate(-11,-11)"><path d="M4 6 L18 3 V15 L4 18 Z"fill="none" stroke="#333" stroke-width="1"/></g></svg><svg class="abs" style="left:10px;top:265px;" width="26" height="26" viewBox="0 0 26 26"><g transform="translate(13,13) scale(1.18) translate(-11,-11)"><path d="M8 4 Q11 2 14 4 V18 Q11 20 8 18 Z M8 4 Q11 6 14 4"fill="none" stroke="#333" stroke-width="1"/></g></svg><svg class="abs" style="left:10px;top:294px;" width="26" height="26" viewBox="0 0 26 26"><g transform="translate(13,13) scale(1.18) translate(-11,-11)"><path d="M3 5 L19 12 V17 L3 10 Z M3 10 V5"fill="none" stroke="#333" stroke-width="1"/></g></svg><svg class="abs" style="left:10px;top:324px;" width="26" height="26" viewBox="0 0 26 26"><g transform="translate(13,13) scale(1.18) translate(-11,-11)"><path d="M2 11 L10 6 L20 8 L12 15 Z M2 11 V13 L12 17 L20 10"fill="none" stroke="#333" stroke-width="1"/></g></svg><svg class="abs" style="left:10px;top:354px;" width="26" height="26" viewBox="0 0 26 26"><g transform="translate(13,13) scale(1.18) translate(-11,-11)"><path d="M2 12 L9 4 L20 9 L13 17 Z M9 4 V12 L13 17 M9 12 L2 12"fill="none" stroke="#333" stroke-width="1"/></g></svg><svg class="abs" style="left:10px;top:384px;" width="26" height="26" viewBox="0 0 26 26"><g transform="translate(13,13) scale(1.18) translate(-11,-11)"><path d="M2 10 L20 3 L15 17 Z M2 10 L15 11 L20 3 M15 11 V17"fill="none" stroke="#333" stroke-width="1"/></g></svg><svg class="abs" style="left:10px;top:414px;" width="26" height="26" viewBox="0 0 26 26"><g transform="translate(13,13) scale(1.18) translate(-11,-11)"><path d="M3 6 L11 3 L19 7 L11 10 Z M3 10 L11 7 L19 11 L11 14 Z M3 14 L11 11 L19 15 L11 18 Z"fill="none" stroke="#333" stroke-width="1"/></g></svg><svg class="abs" style="left:10px;top:444px;" width="26" height="26" viewBox="0 0 26 26"><g transform="translate(13,13) scale(1.18) translate(-11,-11)"><path d="M3 18 V8 L19 4 V14 M3 12 L19 8 M8 7 V17 M14 5 V15"fill="none" stroke="#333" stroke-width="1"/></g></svg><svg class="abs" style="left:10px;top:474px;" width="26" height="26" viewBox="0 0 26 26"><g transform="translate(13,13) scale(1.18) translate(-11,-11)"><rect x="3" y="3" width="16" height="16"fill="none" stroke="#333" stroke-width="1"/><path d="M3 8 H19 M3 13 H19 M9 3 V19 M14 3 V19" stroke="#333" fill="none"/></g></svg><svg class="abs" style="left:10px;top:504px;" width="26" height="26" viewBox="0 0 26 26"><g transform="translate(13,13) scale(1.18) translate(-11,-11)"><path d="M6 3 H16 V19 H6 Z M14 10 V12"fill="none" stroke="#333" stroke-width="1"/></g></svg><svg class="abs" style="left:10px;top:534px;" width="26" height="26" viewBox="0 0 26 26"><g transform="translate(13,13) scale(1.18) translate(-11,-11)"><path d="M4 4 H18 V18 H4 Z M4 11 H18 M11 4 V18"fill="none" stroke="#333" stroke-width="1"/></g></svg><svg class="abs" style="left:10px;top:564px;" width="26" height="26" viewBox="0 0 26 26"><g transform="translate(13,13) scale(1.18) translate(-11,-11)"><path d="M2 8 L11 4 L20 8 L11 12 Z M2 12 L11 16 L20 12 M2 8 V12"fill="none" stroke="#333" stroke-width="1"/></g></svg><svg class="abs" style="left:10px;top:594px;" width="26" height="26" viewBox="0 0 26 26"><g transform="translate(13,13) scale(1.18) translate(-11,-11)"><path d="M4 6 H18 V17 H4 Z M9 6 L6 15 H18"fill="none" stroke="#333" stroke-width="1"/></g></svg><svg class="abs" style="left:10px;top:624px;" width="26" height="26" viewBox="0 0 26 26"><g transform="translate(13,13) scale(1.18) translate(-11,-11)"><path d="M4 4 H10 V7 H13 V4 H18 V18 H4 Z M7 11 H15 M7 14 H15"fill="none" stroke="#333" stroke-width="1"/></g></svg><svg class="abs" style="left:10px;top:654px;" width="26" height="26" viewBox="0 0 26 26"><g transform="translate(13,13) scale(1.18) translate(-11,-11)"><path d="M2 8 Q10 2 20 6 L19 17 Q10 13 3 18 Z M5 12 L17 10 M9 5 L10 16 M14 5 L15 15"fill="none" stroke="#333" stroke-width="1"/></g></svg><svg class="abs" style="left:10px;top:684px;" width="26" height="26" viewBox="0 0 26 26"><g transform="translate(13,13) scale(1.18) translate(-11,-11)"><path d="M7 19 Q3 12 8 4 Q14 2 18 8 L14 19 Z M8 4 L11 10 L14 19"fill="none" stroke="#333" stroke-width="1"/></g></svg><svg class="abs" style="left:10px;top:714px;" width="26" height="26" viewBox="0 0 26 26"><g transform="translate(13,13) scale(1.18) translate(-11,-11)"><path d="M6 3 H15 V11 H6 Z M6 11 L4 19 M15 11 L17 19 M5 15 H16"fill="none" stroke="#333" stroke-width="1"/></g></svg><svg class="abs" style="left:10px;top:744px;" width="26" height="26" viewBox="0 0 26 26"><g transform="translate(13,13) scale(1.18) translate(-11,-11)"><circle cx="11" cy="10" r="4"fill="none" stroke="#333" stroke-width="1"/><path d="M9 15 H13 V18 H9 Z M11 2 V4 M3 10 H5 M17 10 H19 M5 4 L6.5 5.5 M17 4 L15.5 5.5 M5 16 L6.5 14.5 M17 16 L15.5 14.5"fill="none" stroke="#333" stroke-width="1"/></g></svg><svg class="abs" style="left:10px;top:774px;" width="26" height="26" viewBox="0 0 26 26"><g transform="translate(13,13) scale(1.18) translate(-11,-11)"><path d="M3 6 H19 V17 H3 Z M3 11 H19 M8 6 V17 M14 6 V17 M5 4 L8 6 M17 4 L19 6"fill="none" stroke="#333" stroke-width="1"/></g></svg><svg class="abs" style="left:10px;top:804px;" width="26" height="26" viewBox="0 0 26 26"><g transform="translate(13,13) scale(1.18) translate(-11,-11)"><path d="M4 6 L16 3 V16 L4 19 Z M10 5 V17"fill="none" stroke="#333" stroke-width="1"/></g></svg><div class="abs" style="left:0;top:837px;width:46px;height:18px;background:#d9d9d9;border-radius:3px"></div><div class="t" style="left:2px;top:840.8px;font-size:11.3px;color:#000;width:44px;overflow:hidden">Ponto d</div><div class="abs" style="left:0;top:858px;width:46px;height:18px;background:#d9d9d9;border-radius:3px"></div><div class="t" style="left:2px;top:861.8px;font-size:11.3px;color:#000;width:44px;overflow:hidden">Docume</div><div class="abs" style="left:47px;top:998px;width:1873px;height:19px;background:#f0f0f0;border-bottom:1px solid #d0d0d0"></div><div class="abs" style="left:0;top:1017px;width:1920px;height:23px;background:#f0f0f0"></div><svg class="abs" style="left:49px;top:999px;" width="90" height="18" viewBox="0 0 90 18"><path d="M4 5 Q10 1 14 6 Q16 12 9 14 Q5 14 4 11 M4 5 V9 H8" fill="none" stroke="#333" stroke-width="1"/><path d="M37 5 Q31 1 27 6 Q25 12 32 14 Q36 14 37 11 M37 5 V9 H33" fill="none" stroke="#aaa"/><circle cx="55" cy="8" r="5" fill="none" stroke="#333" stroke-width="1"/><path d="M59 12 L62 15 M53 8 H57 M55 6 V10" fill="none" stroke="#333" stroke-width="1"/><path d="M69 1 V17" stroke="#aaa"/><circle cx="83" cy="8" r="5" fill="none" stroke="#333" stroke-width="1"/><path d="M87 12 L89 15 M80 6 L86 10 M86 6 L80 10" fill="none" stroke="#333" stroke-width="1"/></svg><div class="abs" style="left:118px;top:1000px;width:1px;height:16px;background:#aaa"></div><div class="t" style="left:217px;top:1002.0px;font-size:11px;color:#000;transform:translateX(-50%)">502%</div><svg class="abs" style="left:286px;top:1003px;" width="6" height="8" viewBox="0 0 6 8"><path d="M1 0 V8 L5 4 Z" fill="#222"/></svg><div class="abs" style="left:297px;top:1000px;width:1px;height:16px;background:#aaa"></div><div class="t" style="left:398px;top:1002.0px;font-size:11px;color:#000;transform:translateX(-50%)">0,00°</div><svg class="abs" style="left:467px;top:1003px;" width="6" height="8" viewBox="0 0 6 8"><path d="M1 0 V8 L5 4 Z" fill="#222"/></svg><div class="abs" style="left:479px;top:1000px;width:1px;height:16px;background:#aaa"></div><div class="t" style="left:579px;top:1002.0px;font-size:11px;color:#000;transform:translateX(-50%)">1:100</div><svg class="abs" style="left:648px;top:1003px;" width="6" height="8" viewBox="0 0 6 8"><path d="M1 0 V8 L5 4 Z" fill="#222"/></svg><div class="abs" style="left:661px;top:1000px;width:1px;height:16px;background:#aaa"></div><div class="t" style="left:759px;top:1002.0px;font-size:11px;color:#000;transform:translateX(-50%)">04 Plans - Approval</div><svg class="abs" style="left:829px;top:1003px;" width="6" height="8" viewBox="0 0 6 8"><path d="M1 0 V8 L5 4 Z" fill="#222"/></svg><div class="abs" style="left:841px;top:1000px;width:1px;height:16px;background:#aaa"></div><div class="t" style="left:940px;top:1002.0px;font-size:11px;color:#000;transform:translateX(-50%)">Modelo Completo</div><svg class="abs" style="left:1009px;top:1003px;" width="6" height="8" viewBox="0 0 6 8"><path d="M1 0 V8 L5 4 Z" fill="#222"/></svg><div class="abs" style="left:1022px;top:1000px;width:1px;height:16px;background:#aaa"></div><div class="t" style="left:1120px;top:1002.0px;font-size:11px;color:#000;transform:translateX(-50%)">03 Architectural 100</div><svg class="abs" style="left:1189px;top:1003px;" width="6" height="8" viewBox="0 0 6 8"><path d="M1 0 V8 L5 4 Z" fill="#222"/></svg><div class="abs" style="left:1202px;top:1000px;width:1px;height:16px;background:#aaa"></div><div class="t" style="left:1300px;top:1002.0px;font-size:11px;color:#000;transform:translateX(-50%)">03 Building Plans</div><svg class="abs" style="left:1369px;top:1003px;" width="6" height="8" viewBox="0 0 6 8"><path d="M1 0 V8 L5 4 Z" fill="#222"/></svg><div class="abs" style="left:1382px;top:1000px;width:1px;height:16px;background:#aaa"></div><div class="t" style="left:1480px;top:1002.0px;font-size:11px;color:#000;transform:translateX(-50%)">Sem Sobreposição</div><svg class="abs" style="left:1549px;top:1003px;" width="6" height="8" viewBox="0 0 6 8"><path d="M1 0 V8 L5 4 Z" fill="#222"/></svg><div class="abs" style="left:1563px;top:1000px;width:1px;height:16px;background:#aaa"></div><div class="t" style="left:1660px;top:1002.0px;font-size:11px;color:#000;transform:translateX(-50%)">01 Existing Plan</div><svg class="abs" style="left:1730px;top:1003px;" width="6" height="8" viewBox="0 0 6 8"><path d="M1 0 V8 L5 4 Z" fill="#222"/></svg><div class="abs" style="left:1743px;top:1000px;width:1px;height:16px;background:#aaa"></div><div class="t" style="left:1840px;top:1002.0px;font-size:11px;color:#000;transform:translateX(-50%)">Plain Meter</div><svg class="abs" style="left:1910px;top:1003px;" width="6" height="8" viewBox="0 0 6 8"><path d="M1 0 V8 L5 4 Z" fill="#222"/></svg><svg class="abs" style="left:304px;top:999px;" width="18" height="18" viewBox="0 0 18 18"><path d="M3 9 L9 3 L15 9 L9 15 Z M12 13 Q16 15 15 10" fill="none" stroke="#333" stroke-width="1"/></svg><svg class="abs" style="left:485px;top:999px;" width="18" height="18" viewBox="0 0 18 18"><path d="M2 6 H16 V12 H2 Z M5 9 V12 M8 9 V12 M11 9 V12 M14 9 V12" fill="none" stroke="#333" stroke-width="1"/></svg><svg class="abs" style="left:666px;top:999px;" width="18" height="18" viewBox="0 0 18 18"><path d="M3 5 L9 2 L16 5 L9 8 Z M3 9 L9 12 L16 9 M3 13 L9 16 L16 13" fill="none" stroke="#333" stroke-width="1"/></svg><svg class="abs" style="left:847px;top:999px;" width="18" height="18" viewBox="0 0 18 18"><rect x="2" y="3" width="14" height="11" fill="none" stroke="#333" stroke-width="1"/><path d="M2 7 H16 M5 3 L8 7 M10 3 L13 7 M5 10 L8 14 M10 10 L13 14" fill="none" stroke="#333" stroke-width="1"/></svg><svg class="abs" style="left:1028px;top:999px;" width="18" height="18" viewBox="0 0 18 18"><path d="M6 2 V9 Q9 15 12 9 V2 M9 10 V16" fill="none" stroke="#333" stroke-width="1"/></svg><svg class="abs" style="left:1208px;top:999px;" width="18" height="18" viewBox="0 0 18 18"><rect x="2" y="4" width="14" height="10" fill="none" stroke="#333" stroke-width="1"/><rect x="5" y="7" width="8" height="4" fill="none" stroke="#333" stroke-width="1"/></svg><svg class="abs" style="left:1388px;top:999px;" width="18" height="18" viewBox="0 0 18 18"><path d="M3 4 V12 H9 M9 8 H15 V15 H9 Z" fill="none" stroke="#333" stroke-width="1"/></svg><svg class="abs" style="left:1568px;top:999px;" width="18" height="18" viewBox="0 0 18 18"><path d="M3 13 L8 5 L12 8 V15 H3 M12 10 H16 V15" fill="none" stroke="#333" stroke-width="1"/></svg><svg class="abs" style="left:1748px;top:999px;" width="18" height="18" viewBox="0 0 18 18"><path d="M2 4 H16 V14 H2 Z M2 7 H16 M4 2 V4 M14 2 V4" fill="none" stroke="#333" stroke-width="1"/></svg><svg class="abs" style="left:1744px;top:1020px;" width="20" height="18" viewBox="0 0 20 18"><rect x="2.5" y="2.5" width="12" height="9" fill="none" stroke="#333"/><rect x="5.5" y="6.5" width="12" height="9" fill="#f0f0f0" stroke="#333"/></svg><div class="abs" style="left:1768px;top:1020px;width:1px;height:18px;background:#c8c8c8"></div><div class="abs" style="left:1898px;top:1020px;width:1px;height:18px;background:#c8c8c8"></div><div class="t" style="left:1782px;top:1022.2px;font-size:13px;color:#9a9a9a;letter-spacing:-0.3px">GRAPHISOFT ID</div><div class="abs" style="left:446px;top:446px;width:281px;height:431px;background:#fff;border:1px solid #2b7fd4"></div><svg class="abs" style="left:455px;top:453px;" width="17" height="17" viewBox="0 0 17 17"><circle cx="8.5" cy="8.5" r="7.5" fill="#2f5fc7"/><path d="M2 13 Q5 3 12 3 Q15 5 14 9" fill="none" stroke="#fff" stroke-width="1.3"/></svg><div class="t" style="left:476px;top:455.5px;font-size:11.6px;color:#000;">Selecionar Vista</div><div class="t" style="left:655px;top:454.7px;font-size:12.5px;color:#000;">?</div><svg class="abs" style="left:697px;top:454px;" width="14" height="14" viewBox="0 0 14 14"><path d="M1.5 1.5 L12.5 12.5 M12.5 1.5 L1.5 12.5" stroke="#111" stroke-width="1.1"/></svg><div class="abs" style="left:447px;top:477px;width:279px;height:399px;background:#f0f0f0"></div><div class="abs" style="left:447px;top:482px;width:264px;height:362px;background:#fff"></div><div class="abs" style="left:711px;top:482px;width:15px;height:362px;background:#f0f0f0"></div><div class="abs" style="left:712px;top:498px;width:13px;height:296px;background:#cdcdcd"></div><svg class="abs" style="left:713px;top:486px;" width="10" height="8" viewBox="0 0 10 8"><path d="M1 6 L5 2 L9 6" fill="none" stroke="#555" stroke-width="1.5"/></svg><svg class="abs" style="left:713px;top:831px;" width="10" height="8" viewBox="0 0 10 8"><path d="M1 2 L5 6 L9 2" fill="none" stroke="#555" stroke-width="1.5"/></svg><div class="abs" style="left:447px;top:622px;width:263px;height:20px;background:#cce8ff"></div><svg class="abs" style="left:453px;top:487px;" width="11" height="8" viewBox="0 0 11 8"><path d="M1 1.5 L5.5 6 L10 1.5" fill="none" stroke="#333" stroke-width="1.4"/></svg><svg class="abs" style="left:466px;top:483px;" width="18" height="18" viewBox="0 0 18 18"><path d="M1.5 7 L5 3 L8.5 7 V12.5 H1.5 Z M6 5 L9 2 L14 7 V16.5 H9 V10" fill="none" stroke="#4a90e2" stroke-width="0.9"/></svg><div class="t" style="left:487px;top:487.0px;font-size:11.3px;color:#3c3c3c;">Training Series 3</div><svg class="abs" style="left:476px;top:503px;" width="18" height="18" viewBox="0 0 18 18"><path d="M1.5 1.5 H6 V6 H16.5 V14.5 H1.5 Z" fill="none" stroke="#4a90e2" stroke-width="0.9"/></svg><div class="t" style="left:497px;top:507.0px;font-size:11.3px;color:#3c3c3c;">Site</div><svg class="abs" style="left:464px;top:526px;" width="8" height="11" viewBox="0 0 8 11"><path d="M1.5 1 L6 5.5 L1.5 10" fill="none" stroke="#888" stroke-width="1.7"/></svg><svg class="abs" style="left:476px;top:523px;" width="18" height="18" viewBox="0 0 18 18"><path d="M1.5 1.5 H6 V6 H16.5 V14.5 H1.5 Z" fill="#eef4fc" stroke="#4a90e2" stroke-width="0.9"/><path d="M1 13 L4 10 V15 Z" fill="#555"/></svg><div class="t" style="left:497px;top:527.0px;font-size:11.3px;color:#3c3c3c;">Floor Plans</div><svg class="abs" style="left:464px;top:546px;" width="8" height="11" viewBox="0 0 8 11"><path d="M1.5 1 L6 5.5 L1.5 10" fill="none" stroke="#888" stroke-width="1.7"/></svg><svg class="abs" style="left:476px;top:543px;" width="18" height="18" viewBox="0 0 18 18"><path d="M1.5 1.5 H6 V6 H16.5 V14.5 H1.5 Z" fill="#eef4fc" stroke="#4a90e2" stroke-width="0.9"/><path d="M1 13 L4 10 V15 Z" fill="#555"/></svg><div class="t" style="left:497px;top:547.0px;font-size:11.3px;color:#3c3c3c;">Ceiling Plans</div><svg class="abs" style="left:476px;top:563px;" width="18" height="18" viewBox="0 0 18 18"><path d="M3 3 L10 1.5 V16 L3 14.5 Z M10 1.5 L15 3 V14.5 L10 16" fill="none" stroke="#4a90e2" stroke-width="0.9"/></svg><div class="t" style="left:497px;top:567.0px;font-size:11.3px;color:#3c3c3c;">Interior – CineRender</div><svg class="abs" style="left:463px;top:587px;" width="11" height="8" viewBox="0 0 11 8"><path d="M1 1.5 L5.5 6 L10 1.5" fill="none" stroke="#333" stroke-width="1.4"/></svg><svg class="abs" style="left:476px;top:583px;" width="18" height="18" viewBox="0 0 18 18"><path d="M1.5 6 L9 2 L16.5 6 V14.5 H1.5 Z M1.5 6 H16.5" fill="#eef4fc" stroke="#4a90e2" stroke-width="0.9"/><path d="M1 13 L4 10 V15 Z" fill="#555"/></svg><div class="t" style="left:497px;top:587.0px;font-size:11.3px;color:#3c3c3c;">Cortes</div><svg class="abs" style="left:486px;top:603px;" width="18" height="18" viewBox="0 0 18 18"><path d="M1.5 6 L9 2 L16.5 6 V14.5 H1.5 Z M1.5 6 H16.5" fill="none" stroke="#4a90e2" stroke-width="0.9"/></svg><div class="t" style="left:507px;top:607.0px;font-size:11.3px;color:#3c3c3c;">S-01 Building Section</div><svg class="abs" style="left:486px;top:623px;" width="18" height="18" viewBox="0 0 18 18"><path d="M1.5 6 L9 2 L16.5 6 V14.5 H1.5 Z M1.5 6 H16.5" fill="none" stroke="#4a90e2" stroke-width="0.9"/></svg><div class="t" style="left:507px;top:627.0px;font-size:11.3px;color:#000;">S-02 Building Section</div><svg class="abs" style="left:464px;top:646px;" width="8" height="11" viewBox="0 0 8 11"><path d="M1.5 1 L6 5.5 L1.5 10" fill="none" stroke="#888" stroke-width="1.7"/></svg><svg class="abs" style="left:476px;top:643px;" width="18" height="18" viewBox="0 0 18 18"><path d="M1.5 6 L9 2 L16.5 6 V14.5 H1.5 Z M1.5 6 H16.5" fill="#eef4fc" stroke="#4a90e2" stroke-width="0.9"/><path d="M1 13 L4 10 V15 Z" fill="#555"/></svg><div class="t" style="left:497px;top:647.0px;font-size:11.3px;color:#3c3c3c;">Elevações</div><svg class="abs" style="left:476px;top:663px;" width="18" height="18" viewBox="0 0 18 18"><rect x="1.5" y="2.5" width="15" height="12" fill="none" stroke="#4a90e2" stroke-width="0.9"/><rect x="4" y="5" width="4" height="4" fill="none" stroke="#4a90e2"/><rect x="10" y="5" width="4" height="4" fill="none" stroke="#4a90e2"/><path d="M1 13 L4 10 V15 Z" fill="#555"/></svg><div class="t" style="left:497px;top:667.0px;font-size:11.3px;color:#3c3c3c;">Elevações Interiores</div><svg class="abs" style="left:464px;top:686px;" width="8" height="11" viewBox="0 0 8 11"><path d="M1.5 1 L6 5.5 L1.5 10" fill="none" stroke="#888" stroke-width="1.7"/></svg><svg class="abs" style="left:476px;top:683px;" width="18" height="18" viewBox="0 0 18 18"><path d="M1.5 2.5 H16.5 V14.5 H1.5 Z M5 11 L12 4 L14 6 L7 13" fill="#eef4fc" stroke="#4a90e2" stroke-width="0.9"/><path d="M1 13 L4 10 V15 Z" fill="#555"/></svg><div class="t" style="left:497px;top:687.0px;font-size:11.3px;color:#3c3c3c;">Folhas de Trabalho</div><svg class="abs" style="left:464px;top:706px;" width="8" height="11" viewBox="0 0 8 11"><path d="M1.5 1 L6 5.5 L1.5 10" fill="none" stroke="#888" stroke-width="1.7"/></svg><svg class="abs" style="left:476px;top:703px;" width="18" height="18" viewBox="0 0 18 18"><circle cx="9" cy="8.5" r="7" fill="none" stroke="#4a90e2" stroke-width="0.9"/><path d="M9 1.5 V15.5 M2 8.5 H16" stroke="#4a90e2" stroke-width="0.9"/><path d="M1 13 L4 10 V15 Z" fill="#555"/></svg><div class="t" style="left:497px;top:707.0px;font-size:11.3px;color:#3c3c3c;">Detalhes</div><svg class="abs" style="left:464px;top:726px;" width="8" height="11" viewBox="0 0 8 11"><path d="M1.5 1 L6 5.5 L1.5 10" fill="none" stroke="#888" stroke-width="1.7"/></svg><svg class="abs" style="left:476px;top:723px;" width="18" height="18" viewBox="0 0 18 18"><path d="M1.5 3.5 H7 L8.5 5 H16.5 V15.5 H1.5 Z M1.5 6.5 H16.5" fill="none" stroke="#666" stroke-width="0.9"/></svg><div class="t" style="left:497px;top:727.0px;font-size:11.3px;color:#3c3c3c;">3D Renderings</div><svg class="abs" style="left:464px;top:746px;" width="8" height="11" viewBox="0 0 8 11"><path d="M1.5 1 L6 5.5 L1.5 10" fill="none" stroke="#888" stroke-width="1.7"/></svg><svg class="abs" style="left:476px;top:743px;" width="18" height="18" viewBox="0 0 18 18"><rect x="1.5" y="2.5" width="15" height="12" fill="none" stroke="#4a90e2" stroke-width="0.9"/><path d="M5 7 L8 5 H13 V11 L10 13 H5 Z" fill="none" stroke="#4a90e2"/><path d="M1 13 L4 10 V15 Z" fill="#555"/></svg><div class="t" style="left:497px;top:747.0px;font-size:11.3px;color:#3c3c3c;">Documentos 3D</div><svg class="abs" style="left:476px;top:763px;" width="18" height="18" viewBox="0 0 18 18"><path d="M3 3 L10 1.5 V16 L3 14.5 Z M10 1.5 L15 3 V14.5 L10 16" fill="none" stroke="#4a90e2" stroke-width="0.9"/></svg><div class="t" style="left:497px;top:767.0px;font-size:11.3px;color:#3c3c3c;">Perspectiva Cônica Genérica</div><svg class="abs" style="left:476px;top:783px;" width="18" height="18" viewBox="0 0 18 18"><path d="M2 5 L6 1.5 H15 V12 L11 15.5 H2 Z M2 5 H11 V15.5 M11 5 L15 1.5" fill="none" stroke="#4a90e2" stroke-width="0.9"/></svg><div class="t" style="left:497px;top:787.0px;font-size:11.3px;color:#3c3c3c;">Frontal Axonometry</div><svg class="abs" style="left:464px;top:806px;" width="8" height="11" viewBox="0 0 8 11"><path d="M1.5 1 L6 5.5 L1.5 10" fill="none" stroke="#888" stroke-width="1.7"/></svg><svg class="abs" style="left:476px;top:803px;" width="18" height="18" viewBox="0 0 18 18"><path d="M1.5 3.5 H7 L8.5 5 H16.5 V15.5 H1.5 Z M1.5 6.5 H16.5" fill="none" stroke="#666" stroke-width="0.9"/></svg><div class="t" style="left:497px;top:807.0px;font-size:11.3px;color:#3c3c3c;">IFC</div><svg class="abs" style="left:464px;top:826px;" width="8" height="11" viewBox="0 0 8 11"><path d="M1.5 1 L6 5.5 L1.5 10" fill="none" stroke="#888" stroke-width="1.7"/></svg><svg class="abs" style="left:476px;top:823px;" width="18" height="18" viewBox="0 0 18 18"><path d="M1.5 3.5 H7 L8.5 5 H16.5 V15.5 H1.5 Z M1.5 6.5 H16.5" fill="none" stroke="#666" stroke-width="0.9"/></svg><div class="t" style="left:497px;top:827.0px;font-size:11.3px;color:#3c3c3c;">Indexes</div><div class="abs" style="left:453px;top:850px;width:118px;height:20px;background:#e1e1e1;border:1px solid #adadad"></div><div class="t" style="left:512px;top:853.8px;font-size:11.3px;color:#000;transform:translateX(-50%)">Cancelar</div><div class="abs" style="left:603px;top:849px;width:118px;height:21px;background:#e1e1e1;border:2px solid #0078d7"></div><div class="t" style="left:662px;top:853.8px;font-size:11.3px;color:#000;transform:translateX(-50%)">OK</div><svg class="abs" style="left:716px;top:865px;" width="8" height="8" viewBox="0 0 8 8"><rect x="5" y="0" width="1.5" height="1.5" fill="#999"/><rect x="5" y="3" width="1.5" height="1.5" fill="#999"/><rect x="5" y="6" width="1.5" height="1.5" fill="#999"/><rect x="2" y="6" width="1.5" height="1.5" fill="#999"/><rect x="-1" y="6" width="1.5" height="1.5" fill="#999"/></svg><div class="abs" style="left:1374px;top:429px;width:336px;height:578px;background:#f0f0f0;border:1px solid #979797;box-shadow:3px 3px 3px rgba(0,0,0,0.25)"></div><svg class="abs" style="left:1380px;top:435px;" width="18" height="18" viewBox="0 0 18 18"><path d="M2 7 V16 H16 V6" fill="none" stroke="#2d8cf0" stroke-width="1.1"/><path d="M3 6 L8 2 L11 4 L9 6 L14 11 L12 13 L7 8 L5 10 Z" fill="#f0f0f0" stroke="#555" stroke-width="1"/></svg><div class="t" style="left:1406px;top:437.9px;font-size:11.75px;color:#000;">Definições do Corte Selecionado</div><div class="t" style="left:0;width:1691px;text-align:right;top:437.9px;font-size:11.75px">Ctrl+T</div><div class="t" style="left:1406px;top:462.9px;font-size:11.75px;color:#000;">Selecionar &amp; Ativar Ferramenta</div><div class="abs" style="left:1404px;top:483.0px;width:300px;height:1px;background:#bdbdbd"></div><div class="t" style="left:1406px;top:491.9px;font-size:11.75px;color:#000;">Abrir com as Definições Atuais de Vista</div><div class="abs" style="left:1377px;top:509.5px;width:327px;height:25px;background:#a8d3ff;border:1px solid #3b8ee0"></div><div class="t" style="left:1406px;top:516.9px;font-size:11.75px;color:#000;"><span style="text-decoration:underline;text-underline-offset:1.5px">V</span>ista a partir deste Corte</div><svg class="abs" style="left:1697px;top:519px;" width="6" height="8" viewBox="0 0 6 8"><path d="M1 0 V8 L5 4 Z" fill="#222"/></svg><div class="t" style="left:1406px;top:541.9px;font-size:11.75px;color:#000;">Mostrar como Rastreamento e Referência</div><div class="abs" style="left:1404px;top:562.0px;width:300px;height:1px;background:#bdbdbd"></div><div class="t" style="left:1406px;top:570.9px;font-size:11.75px;color:#000;"><span style="text-decoration:underline;text-underline-offset:1.5px">D</span>efinir como Marcador Vinculado</div><div class="abs" style="left:1404px;top:591.0px;width:300px;height:1px;background:#bdbdbd"></div><svg class="abs" style="left:1380px;top:597px;" width="18" height="18" viewBox="0 0 18 18"><circle cx="4.5" cy="14" r="2.3" fill="none" stroke="#444"/><circle cx="13.5" cy="14" r="2.3" fill="none" stroke="#444"/><path d="M3 1 L12 12 M15 1 L6 12" stroke="#444" stroke-width="1"/></svg><div class="t" style="left:1406px;top:599.9px;font-size:11.75px;color:#000;"><span style="text-decoration:underline;text-underline-offset:1.5px">C</span>ortar</div><div class="t" style="left:0;width:1691px;text-align:right;top:599.9px;font-size:11.75px">Ctrl+X</div><svg class="abs" style="left:1380px;top:622px;" width="18" height="18" viewBox="0 0 18 18"><path d="M2 1.5 H8 L10 3.5 V12 H2 Z" fill="none" stroke="#aaa"/><path d="M6 5.5 H12 L15 8.5 V16.5 H6 Z M8 10 H13 M8 12 H13 M8 14 H13" fill="#f5f5f5" stroke="#444"/></svg><div class="t" style="left:1406px;top:624.9px;font-size:11.75px;color:#000;">Copiar</div><div class="t" style="left:0;width:1691px;text-align:right;top:624.9px;font-size:11.75px">Ctrl+C</div><svg class="abs" style="left:1380px;top:647px;" width="18" height="18" viewBox="0 0 18 18"><path d="M3 3.5 H13 V15.5 H3 Z M6 2 H10 V5 H6 Z" fill="none" stroke="#444"/><rect x="8" y="9" width="9" height="8" fill="#fff" stroke="#2d8cf0"/><path d="M10 12 H15 M10 14 H15" stroke="#2d8cf0"/></svg><div class="t" style="left:1406px;top:649.9px;font-size:11.75px;color:#000;">Colar</div><div class="t" style="left:0;width:1691px;text-align:right;top:649.9px;font-size:11.75px">Ctrl+V</div><svg class="abs" style="left:1380px;top:672px;" width="18" height="18" viewBox="0 0 18 18"><path d="M3 3 L14 14 M14 3 L3 14" stroke="#e8412c" stroke-width="1.8"/></svg><div class="t" style="left:1406px;top:674.9px;font-size:11.75px;color:#000;">Apagar</div><div class="abs" style="left:1404px;top:695.0px;width:300px;height:1px;background:#bdbdbd"></div><div class="t" style="left:1406px;top:703.9px;font-size:11.75px;color:#000;">Mover</div><svg class="abs" style="left:1697px;top:706px;" width="6" height="8" viewBox="0 0 6 8"><path d="M1 0 V8 L5 4 Z" fill="#222"/></svg><div class="abs" style="left:1404px;top:724.0px;width:300px;height:1px;background:#bdbdbd"></div><div class="t" style="left:1406px;top:732.9px;font-size:11.75px;color:#000;">Ordem de Visualização</div><svg class="abs" style="left:1697px;top:735px;" width="6" height="8" viewBox="0 0 6 8"><path d="M1 0 V8 L5 4 Z" fill="#222"/></svg><div class="abs" style="left:1404px;top:753.0px;width:300px;height:1px;background:#bdbdbd"></div><div class="t" style="left:1406px;top:761.9px;font-size:11.75px;color:#000;">Vegetais</div><svg class="abs" style="left:1697px;top:764px;" width="6" height="8" viewBox="0 0 6 8"><path d="M1 0 V8 L5 4 Z" fill="#222"/></svg><div class="abs" style="left:1404px;top:782.0px;width:300px;height:1px;background:#bdbdbd"></div><svg class="abs" style="left:1380px;top:788px;" width="18" height="18" viewBox="0 0 18 18"><rect x="1.5" y="1.5" width="3" height="3" fill="none" stroke="#444"/><rect x="13.5" y="1.5" width="3" height="3" fill="none" stroke="#444"/><rect x="1.5" y="13.5" width="3" height="3" fill="none" stroke="#444"/><rect x="13.5" y="13.5" width="3" height="3" fill="none" stroke="#444"/><path d="M5 3 H13 M3 5 V13 M15 5 V13 M5 15 H13" stroke="#2d8cf0"/></svg><div class="t" style="left:1406px;top:790.9px;font-size:11.75px;color:#000;">Conectar</div><svg class="abs" style="left:1697px;top:793px;" width="6" height="8" viewBox="0 0 6 8"><path d="M1 0 V8 L5 4 Z" fill="#222"/></svg><div class="abs" style="left:1404px;top:811.0px;width:300px;height:1px;background:#bdbdbd"></div><svg class="abs" style="left:1380px;top:817px;" width="18" height="18" viewBox="0 0 18 18"><path d="M3 17 V2 H12 L8 6 H3" fill="none" stroke="#444"/><circle cx="12" cy="13" r="4.5" fill="#fff" stroke="#2d8cf0"/><path d="M12 10.5 V15.5 M9.5 13 H14.5" stroke="#2d8cf0"/></svg><div class="t" style="left:1406px;top:819.9px;font-size:11.75px;color:#000;">Adicionar à Nova Anotação...</div><div class="abs" style="left:1404px;top:840.0px;width:300px;height:1px;background:#bdbdbd"></div><svg class="abs" style="left:1380px;top:846px;" width="18" height="18" viewBox="0 0 18 18"><rect x="1.5" y="1.5" width="15" height="15" fill="none" stroke="#444" stroke-dasharray="2 1.5"/><path d="M5 7 L7 5 H13 V11 L11 13 H5 Z M5 7 H11 V13 M11 7 L13 5" fill="none" stroke="#444"/></svg><div class="t" style="left:1406px;top:848.9px;font-size:11.75px;color:#000;">Mostrar Seleção/Retângulo de Seleção em 3D</div><div class="t" style="left:0;width:1690px;text-align:right;top:848.9px;font-size:11.75px">F5</div><svg class="abs" style="left:1380px;top:871px;" width="18" height="18" viewBox="0 0 18 18"><path d="M3 6 L6 3 H15 V12 L12 15 H3 Z M3 6 H12 V15 M12 6 L15 3" fill="none" stroke="#444" stroke-width="1.1"/></svg><div class="t" style="left:1406px;top:873.9px;font-size:11.75px;color:#000;">Mostrar Tudo em 3D</div><div class="t" style="left:0;width:1690px;text-align:right;top:873.9px;font-size:11.75px">Ctrl+F5</div><svg class="abs" style="left:1380px;top:896px;" width="18" height="18" viewBox="0 0 18 18"><rect x="1.5" y="1.5" width="15" height="15" fill="none" stroke="#444" stroke-dasharray="2 1.5"/><path d="M5 7 L7 5 H13 V11 L11 13 H5 Z M5 7 H11 V13 M11 7 L13 5" fill="none" stroke="#444"/><path d="M13 2 L16 4 L13 6" fill="none" stroke="#444"/></svg><div class="t" style="left:1406px;top:898.9px;font-size:11.75px;color:#000;">Mostrar Seleção/Retângulo de Seleção Salvo em 3D</div><div class="abs" style="left:1404px;top:919.0px;width:300px;height:1px;background:#bdbdbd"></div><svg class="abs" style="left:1380px;top:925px;" width="18" height="18" viewBox="0 0 18 18"><path d="M2 5 L9 1.5 L16 5 V13 L9 16.5 L2 13 Z" fill="none" stroke="#aaa"/><path d="M2 9 L9 5.5 L16 9 L9 12.5 Z M9 12.5 V16.5" fill="none" stroke="#2d8cf0" stroke-width="1.1"/></svg><div class="t" style="left:1406px;top:927.9px;font-size:11.75px;color:#000;">Cortar <span style="text-decoration:underline;text-underline-offset:1.5px">Z</span>ona...</div><div class="abs" style="left:1404px;top:948.0px;width:300px;height:1px;background:#bdbdbd"></div><svg class="abs" style="left:1380px;top:954px;" width="18" height="18" viewBox="0 0 18 18"><circle cx="8" cy="8" r="6.5" fill="none" stroke="#444" stroke-width="1.2"/><path d="M12.5 12.5 L17 17" stroke="#444" stroke-width="1.4"/><path d="M4 6 L9 4 L11 9 Z" fill="none" stroke="#444"/></svg><div class="t" style="left:1406px;top:956.9px;font-size:11.75px;color:#000;"><span style="text-decoration:underline;text-underline-offset:1.5px">A</span>mpliar a Seleção</div><div class="t" style="left:0;width:1690px;text-align:right;top:956.9px;font-size:11.75px">Ctrl+Shift+'</div><div class="abs" style="left:1404px;top:977.0px;width:300px;height:1px;background:#bdbdbd"></div><div class="t" style="left:1406px;top:985.9px;font-size:11.75px;color:#000;"><span style="text-decoration:underline;text-underline-offset:1.5px">C</span>ancela a Seleção Tudo</div><svg class="abs" style="left:1647px;top:522px;" width="14" height="22" viewBox="0 0 14 22"><path d="M1 1 V17 L5 13.5 L8 20 L10.5 19 L7.5 12.5 H12.5 Z" fill="#fff" stroke="#000" stroke-width="1"/></svg><div class="abs" style="left:1704px;top:507px;width:212px;height:85px;background:#f0f0f0;border:1px solid #979797;box-shadow:2px 2px 3px rgba(0,0,0,0.25)"></div><div class="t" style="left:1736px;top:517.5px;font-size:11.6px;color:#000;">S-02 Building Section</div><div class="t" style="left:1736px;top:542.5px;font-size:11.6px;color:#000;">S-02 Building Section</div><div class="abs" style="left:1734px;top:561px;width:178px;height:1px;background:#bdbdbd"></div><div class="t" style="left:1736px;top:571.5px;font-size:11.6px;color:#000;">Todas Vistas Relacionadas...</div></body></html>
